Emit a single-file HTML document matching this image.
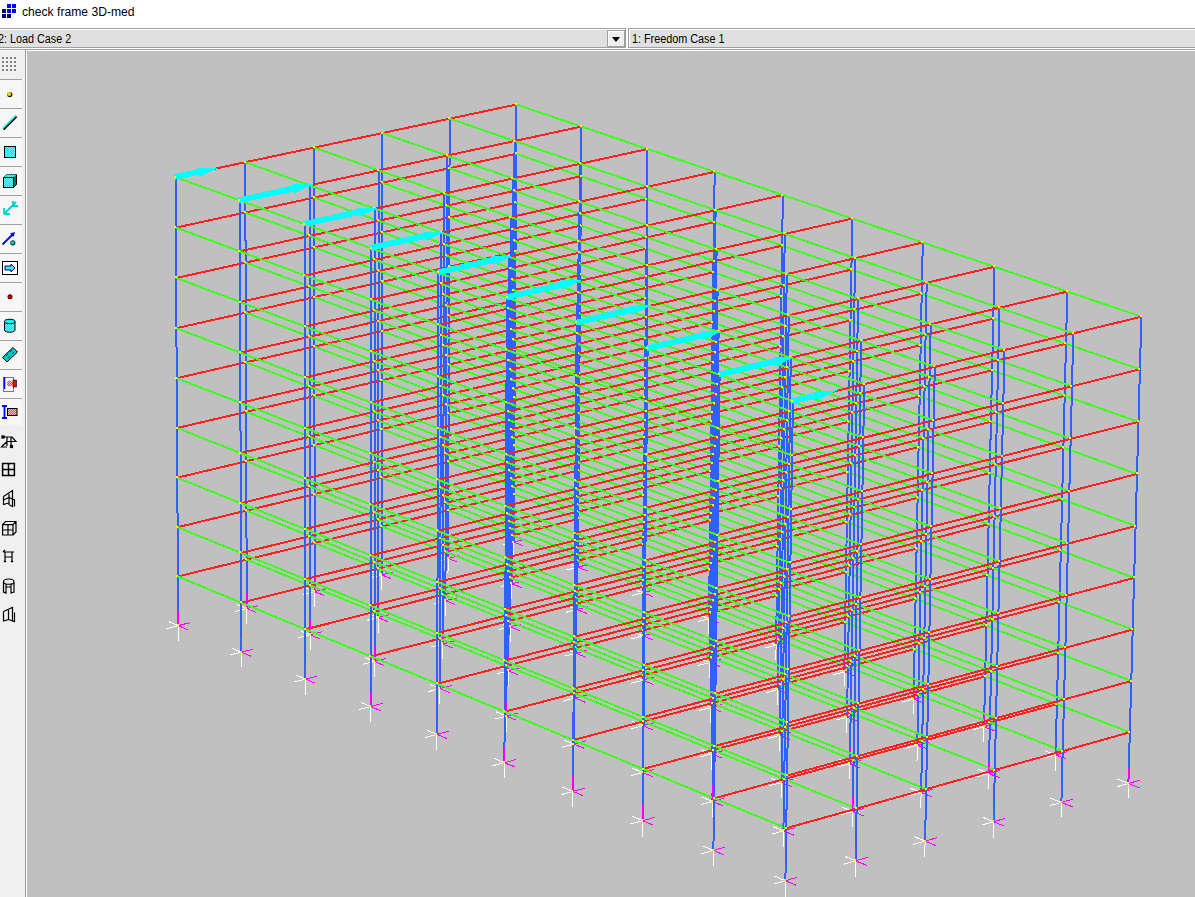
<!DOCTYPE html>
<html><head><meta charset="utf-8">
<style>
html,body{margin:0;padding:0;width:1195px;height:897px;overflow:hidden;background:#fff;}
body{position:relative;font-family:"Liberation Sans",sans-serif;}
.t{position:absolute;white-space:nowrap;color:#000;font-size:12px;}
#title{left:22px;top:5px;font-size:12.5px;transform:scaleX(0.97);transform-origin:0 0;}
.t2{transform:scaleX(0.9);transform-origin:0 0;}
.hl{position:absolute;left:0;width:1195px;height:1px;}
#combo1{position:absolute;left:0;top:28px;width:626px;height:20px;}
#vp{position:absolute;left:27px;top:51px;width:1168px;height:846px;background:#c0c0c0;}
svg{position:absolute;left:0;top:0;}
.r{stroke:#ff2020;stroke-width:2;fill:none}
.g{stroke:#40ff20;stroke-width:2;fill:none}
.b{stroke:#3060ff;stroke-width:2;fill:none}
.w{stroke:#fff;stroke-width:1;fill:none}
.m{stroke:#ff00ff;stroke-width:1;fill:none}
.a{fill:#00ffff}
.y{fill:#ffff00}
</style></head><body>
<svg width="20" height="22" viewBox="0 0 20 22" style="left:0;top:0">
<rect x="7" y="4" width="4" height="4" fill="#0000ff"/><rect x="12" y="4" width="4" height="4" fill="#0000ff"/>
<rect x="2" y="9" width="4" height="4" fill="#000080"/><rect x="7" y="9" width="4" height="4" fill="#0000ff"/><rect x="12" y="9" width="4" height="4" fill="#0000ff"/>
<rect x="2" y="14" width="4" height="4" fill="#000080"/><rect x="7" y="14" width="4" height="4" fill="#000080"/>
</svg>
<div class="t" id="title">check frame 3D-med</div>
<div class="hl" style="top:28px;background:#a0a0a0"></div>
<div class="hl" style="top:29px;background:#fff"></div>
<div class="hl" style="top:30px;height:17px;background:#e0e0e0"></div>
<div class="hl" style="top:47px;background:#a0a0a0"></div>
<div class="hl" style="top:48px;background:#fff"></div>
<div class="hl" style="top:49px;background:#a0a0a0"></div>
<div class="hl" style="top:50px;background:#fff"></div>
<div style="position:absolute;left:625px;top:28px;width:1px;height:20px;background:#a0a0a0"></div>
<div style="position:absolute;left:626px;top:28px;width:2px;height:21px;background:#fff"></div>
<div style="position:absolute;left:628px;top:28px;width:1px;height:20px;background:#a0a0a0"></div>
<div style="position:absolute;left:629px;top:29px;width:1px;height:18px;background:#fff"></div>
<div style="position:absolute;left:607px;top:30px;width:18px;height:17px;background:#a0a0a0"></div>
<div style="position:absolute;left:608px;top:31px;width:16px;height:15px;background:#fff"></div>
<div style="position:absolute;left:609px;top:32px;width:15px;height:14px;background:#efefef"></div>
<svg width="12" height="8" style="left:611px;top:36px"><path d="M1 1h8l-4 5z" fill="#000"/></svg>
<div class="t t2" style="left:-2px;top:32px;">2: Load Case 2</div>
<div class="t t2" style="left:632px;top:32px;">1: Freedom Case 1</div>
<div style="position:absolute;left:0;top:51px;width:25px;height:846px;background:#f0f0f0"></div>
<div style="position:absolute;left:25px;top:49px;width:1px;height:848px;background:#a0a0a0"></div>
<div style="position:absolute;left:26px;top:50px;width:1px;height:847px;background:#fff"></div>
<div id="vp"></div>
<svg width="1195" height="897" viewBox="0 0 1195 897" shape-rendering="crispEdges">
<defs><clipPath id="c"><rect x="27" y="51" width="1168" height="846"/></clipPath></defs>
<g clip-path="url(#c)">
<path class="b" d="M513.7 542L514 494.1M514 494.1L514.3 445.9M514.3 445.9L514.6 397.7"/>
<path class="r" d="M448.3 510.2L514 494.1"/>
<path class="g" d="M514 494.1L578.2 518.9"/>
<path class="b" d="M514.6 397.7L514.9 349.2"/>
<path class="r" d="M448.4 461.8L514.3 445.9"/>
<path class="b" d="M448.1 558.4L448.3 510.2"/>
<path class="g" d="M514.3 445.9L578.6 470.4"/>
<path class="b" d="M514.9 349.2L515.2 300.6"/>
<path class="r" d="M448.6 413.3L514.6 397.7"/>
<path class="b" d="M448.3 510.2L448.4 461.8M577.8 567.2L578.2 518.9"/>
<path class="g" d="M514.6 397.7L579 421.8"/>
<path class="b" d="M515.2 300.6L515.5 251.8"/>
<path class="r" d="M448.8 364.6L514.9 349.2"/>
<path class="b" d="M448.4 461.8L448.6 413.3"/>
<path class="r" d="M381.8 526.5L448.3 510.2"/>
<path class="b" d="M578.2 518.9L578.6 470.4"/>
<path class="g" d="M514.9 349.2L579.4 373"/>
<path class="b" d="M515.5 251.8L515.8 202.9"/>
<path class="g" d="M448.3 510.2L512.3 535.3"/>
<path class="r" d="M449 315.8L515.2 300.6"/>
<path class="b" d="M448.6 413.3L448.8 364.6"/>
<path class="r" d="M381.8 477.9L448.4 461.8"/>
<path class="b" d="M381.7 574.9L381.8 526.5M578.6 470.4L579 421.8"/>
<path class="r" d="M512.3 535.3L578.2 518.9"/>
<path class="g" d="M515.2 300.6L579.8 324.1"/>
<path class="w" d="M513.7 542L504.2 538.3"/>
<path class="m" d="M513.7 542L524.8 539.3"/>
<path class="b" d="M515.8 202.9L516.1 153.8"/>
<path class="w" d="M513.7 542L513.6 556.9"/>
<path class="g" d="M448.4 461.8L512.5 486.6"/>
<path class="r" d="M449.2 266.8L515.5 251.8"/>
<path class="b" d="M448.8 364.6L449 315.8"/>
<path class="m" d="M513.7 542L513.8 527.2"/>
<path class="r" d="M381.9 429.1L448.6 413.3"/>
<path class="g" d="M578.2 518.9L643.4 544.1"/>
<path class="w" d="M513.7 542L502.6 544.8"/>
<path class="b" d="M381.8 526.5L381.8 477.9"/>
<path class="m" d="M513.7 542L523.3 545.8"/>
<path class="b" d="M579 421.8L579.4 373"/>
<path class="r" d="M512.5 486.6L578.6 470.4"/>
<path class="g" d="M515.5 251.8L580.2 275"/>
<path class="b" d="M512 583.8L512.3 535.3M516.1 153.8L516.4 104.5"/>
<path class="g" d="M448.6 413.3L512.8 437.7"/>
<path class="r" d="M449.3 217.6L515.8 202.9"/>
<path class="b" d="M449 315.8L449.2 266.8"/>
<path class="r" d="M382 380.2L448.8 364.6"/>
<path class="g" d="M578.6 470.4L643.9 495.3"/>
<path class="b" d="M381.8 477.9L381.9 429.1"/>
<path class="r" d="M314.5 543L381.8 526.5"/>
<path class="b" d="M579.4 373L579.8 324.1"/>
<path class="r" d="M512.8 437.7L579 421.8"/>
<path class="g" d="M515.8 202.9L580.6 225.7"/>
<path class="b" d="M512.3 535.3L512.5 486.6"/>
<path class="g" d="M448.8 364.6L513.1 388.7"/>
<path class="y" d="M512 541h2v2h-2z"/>
<path class="r" d="M449.5 168.2L516.1 153.8"/>
<path class="b" d="M642.8 592.7L643.4 544.1M449.2 266.8L449.3 217.6"/>
<path class="g" d="M381.8 526.5L445.6 551.8"/>
<path class="r" d="M382 331.1L449 315.8"/>
<path class="g" d="M579 421.8L644.4 446.3"/>
<path class="b" d="M381.9 429.1L382 380.2"/>
<path class="r" d="M314.5 494.1L381.8 477.9"/>
<path class="b" d="M579.8 324.1L580.2 275M314.6 591.6L314.5 543"/>
<path class="r" d="M513.1 388.7L579.4 373"/>
<path class="g" d="M516.1 153.8L581 176.2"/>
<path class="b" d="M512.5 486.6L512.8 437.7"/>
<path class="r" d="M445.6 551.8L512.3 535.3"/>
<path class="g" d="M449 315.8L513.4 339.5"/>
<path class="w" d="M448.1 558.4L438.6 554.6"/>
<path class="y" d="M513 493h2v2h-2z"/>
<path class="m" d="M448.1 558.4L459.3 555.6"/>
<path class="r" d="M449.7 118.7L516.4 104.5"/>
<path class="b" d="M643.4 544.1L643.9 495.3M449.3 217.6L449.5 168.2"/>
<path class="w" d="M448.1 558.4L448 573.3"/>
<path class="g" d="M381.8 477.9L445.8 502.9"/>
<path class="r" d="M382.1 281.9L449.2 266.8"/>
<path class="g" d="M579.4 373L644.9 397.2"/>
<path class="b" d="M382 380.2L382 331.1"/>
<path class="m" d="M448.1 558.4L448.1 543.5"/>
<path class="r" d="M314.5 445.1L381.9 429.1"/>
<path class="b" d="M580.2 275L580.6 225.7"/>
<path class="g" d="M512.3 535.3L577.3 560.8"/>
<path class="w" d="M448.1 558.4L436.8 561.2"/>
<path class="b" d="M314.5 543L314.5 494.1"/>
<path class="r" d="M513.4 339.5L579.8 324.1"/>
<path class="m" d="M448.1 558.4L457.6 562.2"/>
<path class="g" d="M516.4 104.5L581.4 126.6"/>
<path class="b" d="M512.8 437.7L513.1 388.7"/>
<path class="r" d="M445.8 502.9L512.5 486.6"/>
<path class="g" d="M449.2 266.8L513.7 290.1"/>
<path class="b" d="M445.4 600.6L445.6 551.8"/>
<path class="y" d="M513 444h2v2h-2z"/>
<path class="b" d="M643.9 495.3L644.4 446.3M449.5 168.2L449.7 118.7"/>
<path class="g" d="M381.9 429.1L445.9 453.8"/>
<path class="r" d="M577.3 560.8L643.4 544.1M382.2 232.4L449.3 217.6"/>
<path class="g" d="M579.8 324.1L645.4 347.9"/>
<path class="w" d="M577.8 567.2L568.1 563.4"/>
<path class="b" d="M382 331.1L382.1 281.9"/>
<path class="m" d="M577.8 567.2L588.9 564.4"/>
<path class="r" d="M314.4 396L382 380.2"/>
<path class="b" d="M580.6 225.7L581 176.2"/>
<path class="w" d="M577.8 567.2L577.7 582.1"/>
<path class="g" d="M512.5 486.6L577.7 511.7"/>
<path class="b" d="M314.5 494.1L314.5 445.1"/>
<path class="r" d="M513.7 290.1L580.2 275M246.6 559.6L314.5 543"/>
<path class="b" d="M513.1 388.7L513.4 339.5"/>
<path class="m" d="M577.8 567.2L577.9 552.2"/>
<path class="r" d="M445.9 453.8L512.8 437.7"/>
<path class="g" d="M643.4 544.1L709.6 569.7M449.3 217.6L514 240.6"/>
<path class="w" d="M577.8 567.2L566.6 570"/>
<path class="b" d="M445.6 551.8L445.8 502.9"/>
<path class="y" d="M513 396h2v2h-2z"/>
<path class="m" d="M577.8 567.2L587.5 571"/>
<path class="b" d="M644.4 446.3L644.9 397.2"/>
<path class="g" d="M382 380.2L446.1 404.5"/>
<path class="y" d="M447 557h2v2h-2z"/>
<path class="r" d="M577.7 511.7L643.9 495.3M382.2 182.8L449.5 168.2"/>
<path class="g" d="M580.2 275L645.9 298.5"/>
<path class="b" d="M576.9 609.6L577.3 560.8M382.1 281.9L382.2 232.4"/>
<path class="g" d="M314.5 543L378.2 568.6"/>
<path class="r" d="M314.4 346.6L382 331.1"/>
<path class="b" d="M581 176.2L581.4 126.6"/>
<path class="g" d="M512.8 437.7L578.1 462.5"/>
<path class="b" d="M314.5 445.1L314.4 396"/>
<path class="r" d="M514 240.6L580.6 225.7M246.4 510.6L314.5 494.1"/>
<path class="b" d="M513.4 339.5L513.7 290.1M246.7 608.5L246.6 559.6"/>
<path class="r" d="M446.1 404.5L513.1 388.7"/>
<path class="g" d="M643.9 495.3L710.2 520.6M449.5 168.2L514.3 190.9"/>
<path class="b" d="M445.8 502.9L445.9 453.8"/>
<path class="y" d="M513 348h2v2h-2z"/>
<path class="r" d="M378.2 568.6L445.6 551.8"/>
<path class="b" d="M644.9 397.2L645.4 347.9"/>
<path class="g" d="M382 331.1L446.3 355.1"/>
<path class="w" d="M381.7 574.9L372.2 571.1"/>
<path class="y" d="M447 509h2v2h-2z"/>
<path class="r" d="M578.1 462.5L644.4 446.3"/>
<path class="m" d="M381.7 574.9L393 572.1"/>
<path class="r" d="M382.3 133.1L449.7 118.7"/>
<path class="g" d="M580.6 225.7L646.5 248.8"/>
<path class="b" d="M577.3 560.8L577.7 511.7M382.2 232.4L382.2 182.8"/>
<path class="w" d="M381.7 574.9L381.7 589.9"/>
<path class="g" d="M314.5 494.1L378.3 519.4"/>
<path class="r" d="M314.3 297.1L382.1 281.9"/>
<path class="g" d="M513.1 388.7L578.5 413.1"/>
<path class="b" d="M314.4 396L314.4 346.6"/>
<path class="y" d="M576 566h2v2h-2z"/>
<path class="r" d="M514.3 190.9L581 176.2"/>
<path class="m" d="M381.7 574.9L381.7 559.9"/>
<path class="r" d="M246.3 461.3L314.5 445.1"/>
<path class="b" d="M708.9 618.7L709.6 569.7M513.7 290.1L514 240.6"/>
<path class="g" d="M445.6 551.8L510.4 577.6"/>
<path class="w" d="M381.7 574.9L370.3 577.8"/>
<path class="b" d="M246.6 559.6L246.4 510.6"/>
<path class="r" d="M446.3 355.1L513.4 339.5"/>
<path class="m" d="M381.7 574.9L391.2 578.7"/>
<path class="g" d="M644.4 446.3L710.8 471.3M449.7 118.7L514.6 141"/>
<path class="b" d="M445.9 453.8L446.1 404.5"/>
<path class="y" d="M514 299h2v2h-2z"/>
<path class="r" d="M378.3 519.4L445.8 502.9"/>
<path class="b" d="M645.4 347.9L645.9 298.5"/>
<path class="g" d="M382.1 281.9L446.5 305.5"/>
<path class="b" d="M378.1 617.6L378.2 568.6"/>
<path class="y" d="M447 460h2v2h-2z"/>
<path class="r" d="M578.5 413.1L644.9 397.2"/>
<path class="g" d="M581 176.2L647 199"/>
<path class="b" d="M577.7 511.7L578.1 462.5M382.2 182.8L382.3 133.1"/>
<path class="g" d="M314.5 445.1L378.3 470.1"/>
<path class="r" d="M510.4 577.6L577.3 560.8M314.3 247.4L382.2 232.4"/>
<path class="g" d="M513.4 339.5L578.9 363.6"/>
<path class="w" d="M512 583.8L502.3 580"/>
<path class="b" d="M314.4 346.6L314.3 297.1"/>
<path class="y" d="M577 517h2v2h-2z"/>
<path class="m" d="M512 583.8L523.2 581"/>
<path class="r" d="M514.6 141L581.4 126.6M246.1 411.9L314.4 396"/>
<path class="b" d="M709.6 569.7L710.2 520.6M514 240.6L514.3 190.9"/>
<path class="w" d="M512 583.8L511.9 598.8"/>
<path class="g" d="M445.8 502.9L510.7 528.3"/>
<path class="b" d="M246.4 510.6L246.3 461.3"/>
<path class="r" d="M446.5 305.5L513.7 290.1M177.9 576.5L246.6 559.6"/>
<path class="g" d="M644.9 397.2L711.5 421.8"/>
<path class="b" d="M446.1 404.5L446.3 355.1"/>
<path class="y" d="M514 250h2v2h-2z"/>
<path class="m" d="M512 583.8L512.1 568.8"/>
<path class="r" d="M378.3 470.1L445.9 453.8"/>
<path class="b" d="M645.9 298.5L646.5 248.8"/>
<path class="g" d="M577.3 560.8L643.3 586.7M382.2 232.4L446.7 255.7"/>
<path class="w" d="M512 583.8L500.7 586.7"/>
<path class="b" d="M378.2 568.6L378.3 519.4"/>
<path class="y" d="M447 412h2v2h-2z"/>
<path class="r" d="M578.9 363.6L645.4 347.9"/>
<path class="m" d="M512 583.8L521.6 587.7"/>
<path class="g" d="M581.4 126.6L647.5 149"/>
<path class="b" d="M578.1 462.5L578.5 413.1"/>
<path class="g" d="M314.4 396L378.4 420.6"/>
<path class="y" d="M380 573h2v2h-2z"/>
<path class="r" d="M510.7 528.3L577.7 511.7M314.2 197.6L382.2 182.8"/>
<path class="g" d="M513.7 290.1L579.3 313.9"/>
<path class="b" d="M510.1 626.7L510.4 577.6M314.3 297.1L314.3 247.4"/>
<path class="y" d="M577 469h2v2h-2z"/>
<path class="g" d="M246.6 559.6L310 585.5"/>
<path class="r" d="M245.9 362.3L314.4 346.6"/>
<path class="b" d="M710.2 520.6L710.8 471.3M514.3 190.9L514.6 141"/>
<path class="g" d="M445.9 453.8L511 478.9"/>
<path class="b" d="M246.3 461.3L246.1 411.9"/>
<path class="r" d="M643.3 586.7L709.6 569.7M446.7 255.7L514 240.6M177.6 527.2L246.4 510.6"/>
<path class="g" d="M645.4 347.9L712.1 372.1"/>
<path class="w" d="M642.8 592.7L633 588.9"/>
<path class="b" d="M446.3 355.1L446.5 305.5"/>
<path class="y" d="M514 201h2v2h-2z"/>
<path class="m" d="M642.8 592.7L654 589.9"/>
<path class="b" d="M178.1 625.6L177.9 576.5"/>
<path class="r" d="M378.4 420.6L446.1 404.5"/>
<path class="b" d="M646.5 248.8L647 199"/>
<path class="w" d="M642.8 592.7L642.7 607.8"/>
<path class="g" d="M577.7 511.7L643.8 537.3M382.2 182.8L446.8 205.7"/>
<path class="b" d="M378.3 519.4L378.3 470.1"/>
<path class="y" d="M447 363h2v2h-2z"/>
<path class="r" d="M579.3 313.9L645.9 298.5M310 585.5L378.2 568.6"/>
<path class="b" d="M578.5 413.1L578.9 363.6"/>
<path class="g" d="M314.4 346.6L378.4 370.9"/>
<path class="w" d="M314.6 591.6L305.1 587.8"/>
<path class="y" d="M380 525h2v2h-2z"/>
<path class="m" d="M642.8 592.7L643 577.7"/>
<path class="r" d="M511 478.9L578.1 462.5"/>
<path class="m" d="M314.6 591.6L326.1 588.8"/>
<path class="r" d="M314.2 147.6L382.3 133.1"/>
<path class="g" d="M709.6 569.7L776.8 595.7M514 240.6L579.7 264"/>
<path class="w" d="M642.8 592.7L631.7 595.6"/>
<path class="b" d="M510.4 577.6L510.7 528.3M314.3 247.4L314.2 197.6"/>
<path class="w" d="M314.6 591.6L314.6 606.7"/>
<path class="y" d="M577 420h2v2h-2z"/>
<path class="g" d="M246.4 510.6L310 536.1"/>
<path class="m" d="M642.8 592.7L652.7 596.6"/>
<path class="r" d="M245.8 312.6L314.3 297.1"/>
<path class="b" d="M710.8 471.3L711.5 421.8"/>
<path class="g" d="M446.1 404.5L511.3 429.3"/>
<path class="b" d="M246.1 411.9L245.9 362.3"/>
<path class="y" d="M510 582h2v2h-2z"/>
<path class="r" d="M643.8 537.3L710.2 520.6M446.8 205.7L514.3 190.9"/>
<path class="m" d="M314.6 591.6L314.6 576.6"/>
<path class="r" d="M177.3 477.7L246.3 461.3"/>
<path class="g" d="M645.9 298.5L712.7 322.3"/>
<path class="b" d="M642.8 635.9L643.3 586.7M446.5 305.5L446.7 255.7"/>
<path class="y" d="M515 152h2v2h-2z"/>
<path class="g" d="M378.2 568.6L442.9 594.6"/>
<path class="w" d="M314.6 591.6L303.1 594.5"/>
<path class="b" d="M177.9 576.5L177.6 527.2"/>
<path class="r" d="M378.4 370.9L446.3 355.1"/>
<path class="m" d="M314.6 591.6L324.1 595.5"/>
<path class="b" d="M647 199L647.5 149"/>
<path class="g" d="M578.1 462.5L644.3 487.7M382.3 133.1L447 155.6"/>
<path class="b" d="M378.3 470.1L378.4 420.6"/>
<path class="y" d="M447 314h2v2h-2z"/>
<path class="r" d="M579.7 264L646.5 248.8M310 536.1L378.3 519.4"/>
<path class="b" d="M578.9 363.6L579.3 313.9"/>
<path class="g" d="M314.3 297.1L378.5 321"/>
<path class="b" d="M310.1 634.8L310 585.5"/>
<path class="y" d="M380 476h2v2h-2z"/>
<path class="r" d="M511.3 429.3L578.5 413.1"/>
<path class="g" d="M710.2 520.6L777.6 546.3M514.3 190.9L580.1 213.9"/>
<path class="b" d="M510.7 528.3L511 478.9M314.2 197.6L314.2 147.6"/>
<path class="y" d="M578 372h2v2h-2z"/>
<path class="g" d="M246.3 461.3L309.9 486.5"/>
<path class="r" d="M442.9 594.6L510.4 577.6M245.6 262.6L314.3 247.4"/>
<path class="b" d="M711.5 421.8L712.1 372.1"/>
<path class="g" d="M446.3 355.1L511.6 379.5"/>
<path class="w" d="M445.4 600.6L435.8 596.7"/>
<path class="b" d="M245.9 362.3L245.8 312.6"/>
<path class="y" d="M511 534h2v2h-2z"/>
<path class="r" d="M644.3 487.7L710.8 471.3"/>
<path class="m" d="M445.4 600.6L456.8 597.7"/>
<path class="r" d="M447 155.6L514.6 141M177 428L246.1 411.9"/>
<path class="g" d="M646.5 248.8L713.4 272.3"/>
<path class="b" d="M643.3 586.7L643.8 537.3M446.7 255.7L446.8 205.7"/>
<path class="w" d="M445.4 600.6L445.4 615.7"/>
<path class="y" d="M515 103h2v2h-2z"/>
<path class="g" d="M378.3 519.4L443 545.1"/>
<path class="b" d="M177.6 527.2L177.3 477.7"/>
<path class="r" d="M378.5 321L446.5 305.5"/>
<path class="g" d="M578.5 413.1L644.9 438"/>
<path class="b" d="M378.4 420.6L378.4 370.9"/>
<path class="y" d="M641 591h2v2h-2zM448 265h2v2h-2z"/>
<path class="r" d="M580.1 213.9L647 199"/>
<path class="m" d="M445.4 600.6L445.5 585.5"/>
<path class="r" d="M309.9 486.5L378.3 470.1"/>
<path class="b" d="M776.1 645.1L776.8 595.7M579.3 313.9L579.7 264"/>
<path class="g" d="M510.4 577.6L576.3 603.8M314.3 247.4L378.6 271"/>
<path class="w" d="M445.4 600.6L434 603.5"/>
<path class="b" d="M310 585.5L310 536.1"/>
<path class="y" d="M380 428h2v2h-2z"/>
<path class="r" d="M511.6 379.5L578.9 363.6"/>
<path class="m" d="M445.4 600.6L455.1 604.5"/>
<path class="g" d="M710.8 471.3L778.3 496.6M514.6 141L580.5 163.7"/>
<path class="b" d="M511 478.9L511.3 429.3"/>
<path class="y" d="M578 323h2v2h-2z"/>
<path class="g" d="M246.1 411.9L309.9 436.8"/>
<path class="y" d="M313 590h2v2h-2z"/>
<path class="r" d="M443 545.1L510.7 528.3M245.4 212.5L314.2 197.6"/>
<path class="b" d="M712.1 372.1L712.7 322.3"/>
<path class="g" d="M446.5 305.5L511.9 329.5"/>
<path class="b" d="M442.7 644L442.9 594.6M245.8 312.6L245.6 262.6"/>
<path class="y" d="M511 485h2v2h-2z"/>
<path class="g" d="M177.9 576.5L241.1 602.7"/>
<path class="r" d="M644.9 438L711.5 421.8M176.7 378.2L245.9 362.3"/>
<path class="g" d="M647 199L714 222.2"/>
<path class="b" d="M643.8 537.3L644.3 487.7M446.8 205.7L447 155.6"/>
<path class="g" d="M378.3 470.1L443.2 495.4"/>
<path class="b" d="M177.3 477.7L177 428"/>
<path class="r" d="M576.3 603.8L643.3 586.7M378.6 271L446.7 255.7"/>
<path class="g" d="M578.9 363.6L645.4 388.1"/>
<path class="w" d="M576.9 609.6L567.1 605.7"/>
<path class="b" d="M378.4 370.9L378.5 321"/>
<path class="y" d="M642 543h2v2h-2zM448 216h2v2h-2z"/>
<path class="m" d="M576.9 609.6L588.1 606.7"/>
<path class="r" d="M580.5 163.7L647.5 149M309.9 436.8L378.4 420.6"/>
<path class="b" d="M776.8 595.7L777.6 546.3M579.7 264L580.1 213.9"/>
<path class="w" d="M576.9 609.6L576.7 624.7"/>
<path class="g" d="M510.7 528.3L576.7 554.1M314.2 197.6L378.6 220.8"/>
<path class="b" d="M310 536.1L309.9 486.5"/>
<path class="y" d="M380 379h2v2h-2z"/>
<path class="r" d="M511.9 329.5L579.3 313.9M241.1 602.7L310 585.5"/>
<path class="g" d="M711.5 421.8L779.1 446.8"/>
<path class="b" d="M511.3 429.3L511.6 379.5"/>
<path class="y" d="M579 273h2v2h-2z"/>
<path class="g" d="M245.9 362.3L309.8 386.8"/>
<path class="w" d="M246.7 608.5L237.3 604.6"/>
<path class="y" d="M313 541h2v2h-2z"/>
<path class="m" d="M576.9 609.6L577 594.5"/>
<path class="r" d="M443.2 495.4L511 478.9"/>
<path class="m" d="M246.7 608.5L258.3 605.7"/>
<path class="r" d="M245.3 162.2L314.2 147.6"/>
<path class="b" d="M712.7 322.3L713.4 272.3"/>
<path class="g" d="M643.3 586.7L710.4 613M446.7 255.7L512.2 279.4"/>
<path class="w" d="M576.9 609.6L565.6 612.5"/>
<path class="b" d="M442.9 594.6L443 545.1M245.6 262.6L245.4 212.5"/>
<path class="w" d="M246.7 608.5L246.8 623.7"/>
<path class="y" d="M511 436h2v2h-2z"/>
<path class="g" d="M177.6 527.2L241 553"/>
<path class="r" d="M645.4 388.1L712.1 372.1"/>
<path class="m" d="M576.9 609.6L586.7 613.5"/>
<path class="r" d="M176.4 328.2L245.8 312.6"/>
<path class="g" d="M647.5 149L714.7 171.8"/>
<path class="b" d="M644.3 487.7L644.9 438"/>
<path class="g" d="M378.4 420.6L443.4 445.5"/>
<path class="b" d="M177 428L176.7 378.2"/>
<path class="y" d="M444 599h2v2h-2z"/>
<path class="r" d="M576.7 554.1L643.8 537.3M378.6 220.8L446.8 205.7"/>
<path class="m" d="M246.7 608.5L246.7 593.4"/>
<path class="g" d="M579.3 313.9L645.9 338"/>
<path class="b" d="M575.9 653.2L576.3 603.8M378.5 321L378.6 271"/>
<path class="y" d="M642 494h2v2h-2zM448 167h2v2h-2z"/>
<path class="g" d="M310 585.5L374.5 611.9"/>
<path class="w" d="M246.7 608.5L235.1 611.4"/>
<path class="r" d="M309.8 386.8L378.4 370.9"/>
<path class="m" d="M246.7 608.5L256.2 612.5"/>
<path class="b" d="M777.6 546.3L778.3 496.6M580.1 213.9L580.5 163.7"/>
<path class="g" d="M511 478.9L577.1 504.3M314.2 147.6L378.7 170.4"/>
<path class="b" d="M309.9 486.5L309.9 436.8"/>
<path class="y" d="M381 330h2v2h-2z"/>
<path class="r" d="M710.4 613L776.8 595.7M512.2 279.4L579.7 264M241 553L310 536.1"/>
<path class="g" d="M712.1 372.1L779.8 396.8"/>
<path class="w" d="M708.9 618.7L698.9 614.8"/>
<path class="b" d="M511.6 379.5L511.9 329.5"/>
<path class="y" d="M579 224h2v2h-2z"/>
<path class="g" d="M245.8 312.6L309.8 336.7"/>
<path class="m" d="M708.9 618.7L720.1 615.8"/>
<path class="b" d="M241.3 652.2L241.1 602.7"/>
<path class="y" d="M313 493h2v2h-2z"/>
<path class="r" d="M443.4 445.5L511.3 429.3"/>
<path class="b" d="M713.4 272.3L714 222.2"/>
<path class="w" d="M708.9 618.7L708.7 633.8"/>
<path class="g" d="M643.8 537.3L711 563.2M446.8 205.7L512.5 229"/>
<path class="b" d="M443 545.1L443.2 495.4M245.4 212.5L245.3 162.2"/>
<path class="y" d="M512 387h2v2h-2z"/>
<path class="g" d="M177.3 477.7L240.8 503.2"/>
<path class="r" d="M645.9 338L712.7 322.3M374.5 611.9L442.9 594.6M176.2 278L245.6 262.6"/>
<path class="b" d="M644.9 438L645.4 388.1"/>
<path class="g" d="M378.4 370.9L443.6 395.5"/>
<path class="w" d="M378.1 617.6L368.5 613.7"/>
<path class="b" d="M176.7 378.2L176.4 328.2"/>
<path class="y" d="M444 550h2v2h-2z"/>
<path class="m" d="M708.9 618.7L709.1 603.5"/>
<path class="r" d="M577.1 504.3L644.3 487.7"/>
<path class="m" d="M378.1 617.6L389.6 614.7"/>
<path class="r" d="M378.7 170.4L447 155.6"/>
<path class="g" d="M776.8 595.7L845.1 622.2M579.7 264L646.5 287.8"/>
<path class="w" d="M708.9 618.7L697.7 621.6"/>
<path class="b" d="M576.3 603.8L576.7 554.1M378.6 271L378.6 220.8"/>
<path class="w" d="M378.1 617.6L378.1 632.8"/>
<path class="y" d="M643 445h2v2h-2zM448 117h2v2h-2z"/>
<path class="g" d="M310 536.1L374.6 562.1"/>
<path class="m" d="M708.9 618.7L718.9 622.6"/>
<path class="r" d="M309.8 336.7L378.5 321"/>
<path class="b" d="M778.3 496.6L779.1 446.8"/>
<path class="g" d="M511.3 429.3L577.5 454.4"/>
<path class="b" d="M309.9 436.8L309.8 386.8"/>
<path class="y" d="M575 608h2v2h-2zM381 280h2v2h-2z"/>
<path class="r" d="M711 563.2L777.6 546.3M512.5 229L580.1 213.9"/>
<path class="m" d="M378.1 617.6L378.2 602.4"/>
<path class="r" d="M240.8 503.2L309.9 486.5"/>
<path class="g" d="M712.7 322.3L780.6 346.6"/>
<path class="b" d="M709.8 662.5L710.4 613M511.9 329.5L512.2 279.4"/>
<path class="y" d="M580 175h2v2h-2z"/>
<path class="g" d="M442.9 594.6L508.6 621.1M245.6 262.6L309.7 286.4"/>
<path class="w" d="M378.1 617.6L366.6 620.5"/>
<path class="b" d="M241.1 602.7L241 553"/>
<path class="y" d="M313 444h2v2h-2z"/>
<path class="r" d="M443.6 395.5L511.6 379.5"/>
<path class="m" d="M378.1 617.6L387.7 621.5"/>
<path class="b" d="M714 222.2L714.7 171.8"/>
<path class="g" d="M644.3 487.7L711.7 513.3M447 155.6L512.8 178.5"/>
<path class="b" d="M443.2 495.4L443.4 445.5"/>
<path class="y" d="M512 338h2v2h-2z"/>
<path class="g" d="M177 428L240.6 453.1"/>
<path class="r" d="M646.5 287.8L713.4 272.3"/>
<path class="y" d="M245 607h2v2h-2z"/>
<path class="r" d="M374.6 562.1L443 545.1M175.9 227.6L245.4 212.5"/>
<path class="b" d="M645.4 388.1L645.9 338"/>
<path class="g" d="M378.5 321L443.7 345.3"/>
<path class="b" d="M374.5 661.5L374.5 611.9M176.4 328.2L176.2 278"/>
<path class="y" d="M444 501h2v2h-2z"/>
<path class="r" d="M577.5 454.4L644.9 438"/>
<path class="g" d="M777.6 546.3L846 572.3M580.1 213.9L647 237.4"/>
<path class="b" d="M576.7 554.1L577.1 504.3M378.6 220.8L378.7 170.4"/>
<path class="y" d="M643 396h2v2h-2z"/>
<path class="g" d="M309.9 486.5L374.6 512.1"/>
<path class="r" d="M508.6 621.1L576.3 603.8M309.7 286.4L378.6 271"/>
<path class="b" d="M779.1 446.8L779.8 396.8"/>
<path class="g" d="M511.6 379.5L578 404.2"/>
<path class="w" d="M510.1 626.7L500.4 622.8"/>
<path class="b" d="M309.8 386.8L309.8 336.7"/>
<path class="y" d="M576 559h2v2h-2zM381 231h2v2h-2z"/>
<path class="r" d="M711.7 513.3L778.3 496.6"/>
<path class="m" d="M510.1 626.7L521.5 623.8"/>
<path class="r" d="M512.8 178.5L580.5 163.7M240.6 453.1L309.9 436.8"/>
<path class="g" d="M713.4 272.3L781.4 296.2"/>
<path class="b" d="M710.4 613L711 563.2M512.2 279.4L512.5 229"/>
<path class="w" d="M510.1 626.7L510.1 641.9"/>
<path class="y" d="M580 125h2v2h-2z"/>
<path class="g" d="M443 545.1L508.9 571.2M245.4 212.5L309.7 235.9"/>
<path class="b" d="M241 553L240.8 503.2"/>
<path class="y" d="M313 394h2v2h-2z"/>
<path class="r" d="M443.7 345.3L511.9 329.5"/>
<path class="g" d="M644.9 438L712.3 463.2"/>
<path class="b" d="M443.4 445.5L443.6 395.5"/>
<path class="y" d="M707 617h2v2h-2zM512 289h2v2h-2z"/>
<path class="g" d="M176.7 378.2L240.4 402.9"/>
<path class="r" d="M647 237.4L714 222.2"/>
<path class="w" d="M178.1 625.6L168.8 621.7"/>
<path class="y" d="M245 558h2v2h-2z"/>
<path class="m" d="M510.1 626.7L510.2 611.5"/>
<path class="r" d="M374.6 512.1L443.2 495.4"/>
<path class="m" d="M178.1 625.6L189.9 622.7"/>
<path class="r" d="M175.6 177.1L245.3 162.2"/>
<path class="b" d="M844.3 671.8L845.1 622.2M645.9 338L646.5 287.8"/>
<path class="g" d="M576.3 603.8L643.3 630.4M378.6 271L443.9 294.9"/>
<path class="w" d="M510.1 626.7L498.7 629.6"/>
<path class="b" d="M374.5 611.9L374.6 562.1M176.2 278L175.9 227.6"/>
<path class="w" d="M178.1 625.6L178.2 640.8"/>
<path class="y" d="M444 452h2v2h-2z"/>
<path class="r" d="M578 404.2L645.4 388.1"/>
<path class="m" d="M510.1 626.7L519.9 630.7"/>
<path class="g" d="M778.3 496.6L846.9 522.3M580.5 163.7L647.5 186.8"/>
<path class="b" d="M577.1 504.3L577.5 454.4"/>
<path class="y" d="M644 346h2v2h-2z"/>
<path class="g" d="M309.9 436.8L374.7 462"/>
<path class="y" d="M377 616h2v2h-2z"/>
<path class="r" d="M508.9 571.2L576.7 554.1M309.7 235.9L378.6 220.8"/>
<path class="b" d="M779.8 396.8L780.6 346.6"/>
<path class="m" d="M178.1 625.6L178.1 610.4"/>
<path class="g" d="M511.9 329.5L578.4 353.9"/>
<path class="b" d="M508.3 670.8L508.6 621.1M309.8 336.7L309.7 286.4"/>
<path class="y" d="M576 510h2v2h-2zM381 181h2v2h-2z"/>
<path class="g" d="M241.1 602.7L305.4 629.3"/>
<path class="r" d="M712.3 463.2L779.1 446.8"/>
<path class="w" d="M178.1 625.6L166.4 628.6"/>
<path class="r" d="M240.4 402.9L309.8 386.8"/>
<path class="g" d="M714 222.2L782.1 245.7"/>
<path class="m" d="M178.1 625.6L187.6 629.6"/>
<path class="b" d="M711 563.2L711.7 513.3M512.5 229L512.8 178.5"/>
<path class="g" d="M443.2 495.4L509.1 521.2M245.3 162.2L309.6 185.3"/>
<path class="b" d="M240.8 503.2L240.6 453.1"/>
<path class="y" d="M313 345h2v2h-2z"/>
<path class="r" d="M643.3 630.4L710.4 613M443.9 294.9L512.2 279.4"/>
<path class="g" d="M645.4 388.1L713 413"/>
<path class="w" d="M642.8 635.9L632.8 631.9"/>
<path class="b" d="M443.6 395.5L443.7 345.3"/>
<path class="y" d="M708 568h2v2h-2zM513 239h2v2h-2z"/>
<path class="g" d="M176.4 328.2L240.3 352.6"/>
<path class="m" d="M642.8 635.9L654.1 632.9"/>
<path class="r" d="M647.5 186.8L714.7 171.8"/>
<path class="y" d="M245 509h2v2h-2z"/>
<path class="r" d="M374.7 462L443.4 445.5"/>
<path class="b" d="M845.1 622.2L846 572.3M646.5 287.8L647 237.4"/>
<path class="w" d="M642.8 635.9L642.6 651.1"/>
<path class="g" d="M576.7 554.1L643.8 580.4M378.6 220.8L444.1 244.3"/>
<path class="b" d="M374.6 562.1L374.6 512.1M175.9 227.6L175.6 177.1"/>
<path class="y" d="M445 403h2v2h-2z"/>
<path class="r" d="M578.4 353.9L645.9 338M305.4 629.3L374.5 611.9"/>
<path class="g" d="M779.1 446.8L847.8 472.1"/>
<path class="b" d="M577.5 454.4L578 404.2"/>
<path class="y" d="M644 297h2v2h-2z"/>
<path class="g" d="M309.8 386.8L374.8 411.7"/>
<path class="w" d="M310.1 634.8L300.5 630.8"/>
<path class="y" d="M377 567h2v2h-2z"/>
<path class="m" d="M642.8 635.9L642.9 620.6"/>
<path class="r" d="M509.1 521.2L577.1 504.3"/>
<path class="m" d="M310.1 634.8L321.7 631.9"/>
<path class="r" d="M309.6 185.3L378.7 170.4"/>
<path class="b" d="M780.6 346.6L781.4 296.2"/>
<path class="g" d="M710.4 613L778.6 639.7M512.2 279.4L578.8 303.4"/>
<path class="w" d="M642.8 635.9L631.5 638.8"/>
<path class="b" d="M508.6 621.1L508.9 571.2M309.7 286.4L309.7 235.9"/>
<path class="w" d="M310.1 634.8L310.1 650"/>
<path class="y" d="M577 461h2v2h-2zM381 132h2v2h-2z"/>
<path class="g" d="M241 553L305.4 579.2"/>
<path class="r" d="M713 413L779.8 396.8"/>
<path class="m" d="M642.8 635.9L652.8 639.8"/>
<path class="r" d="M240.3 352.6L309.8 336.7"/>
<path class="g" d="M714.7 171.8L782.9 195"/>
<path class="b" d="M711.7 513.3L712.3 463.2"/>
<path class="g" d="M443.4 445.5L509.4 470.9"/>
<path class="b" d="M240.6 453.1L240.4 402.9"/>
<path class="y" d="M509 625h2v2h-2zM313 296h2v2h-2z"/>
<path class="r" d="M643.8 580.4L711 563.2M444.1 244.3L512.5 229"/>
<path class="m" d="M310.1 634.8L310.1 619.5"/>
<path class="g" d="M645.9 338L713.6 362.5"/>
<path class="b" d="M642.7 680.2L643.3 630.4M443.7 345.3L443.9 294.9"/>
<path class="y" d="M709 519h2v2h-2zM513 189h2v2h-2z"/>
<path class="g" d="M374.5 611.9L440.1 638.6M176.2 278L240.1 302"/>
<path class="w" d="M310.1 634.8L298.5 637.7"/>
<path class="y" d="M245 460h2v2h-2z"/>
<path class="r" d="M374.8 411.7L443.6 395.5"/>
<path class="m" d="M310.1 634.8L319.7 638.8"/>
<path class="b" d="M846 572.3L846.9 522.3M647 237.4L647.5 186.8"/>
<path class="g" d="M577.1 504.3L644.3 530.2M378.7 170.4L444.3 193.6"/>
<path class="b" d="M374.6 512.1L374.7 462"/>
<path class="y" d="M445 354h2v2h-2z"/>
<path class="r" d="M778.6 639.7L845.1 622.2M578.8 303.4L646.5 287.8"/>
<path class="y" d="M177 624h2v2h-2z"/>
<path class="r" d="M305.4 579.2L374.6 562.1"/>
<path class="g" d="M779.8 396.8L848.7 421.8"/>
<path class="w" d="M776.1 645.1L765.9 641.1"/>
<path class="b" d="M578 404.2L578.4 353.9"/>
<path class="y" d="M645 247h2v2h-2z"/>
<path class="g" d="M309.8 336.7L374.8 361.2"/>
<path class="m" d="M776.1 645.1L787.3 642.1"/>
<path class="b" d="M305.5 679.1L305.4 629.3"/>
<path class="y" d="M377 518h2v2h-2z"/>
<path class="r" d="M509.4 470.9L577.5 454.4"/>
<path class="b" d="M781.4 296.2L782.1 245.7"/>
<path class="w" d="M776.1 645.1L775.8 660.3"/>
<path class="g" d="M711 563.2L779.4 589.6M512.5 229L579.2 252.7"/>
<path class="b" d="M508.9 571.2L509.1 521.2M309.7 235.9L309.6 185.3"/>
<path class="y" d="M577 412h2v2h-2z"/>
<path class="g" d="M240.8 503.2L305.3 529"/>
<path class="r" d="M713.6 362.5L780.6 346.6M440.1 638.6L508.6 621.1M240.1 302L309.7 286.4"/>
<path class="b" d="M712.3 463.2L713 413"/>
<path class="g" d="M443.6 395.5L509.7 420.5"/>
<path class="w" d="M442.7 644L432.9 640"/>
<path class="b" d="M240.4 402.9L240.3 352.6"/>
<path class="y" d="M509 576h2v2h-2z"/>
<path class="m" d="M776.1 645.1L776.3 629.8"/>
<path class="y" d="M313 246h2v2h-2z"/>
<path class="r" d="M644.3 530.2L711.7 513.3"/>
<path class="m" d="M442.7 644L454.2 641"/>
<path class="r" d="M444.3 193.6L512.8 178.5"/>
<path class="g" d="M845.1 622.2L914.6 649.1M646.5 287.8L714.3 311.9"/>
<path class="w" d="M776.1 645.1L764.8 648"/>
<path class="b" d="M643.3 630.4L643.8 580.4M443.9 294.9L444.1 244.3"/>
<path class="w" d="M442.7 644L442.6 659.3"/>
<path class="y" d="M709 470h2v2h-2zM513 140h2v2h-2z"/>
<path class="g" d="M374.6 562.1L440.2 588.5M175.9 227.6L239.9 251.3"/>
<path class="m" d="M776.1 645.1L786.2 649"/>
<path class="y" d="M245 410h2v2h-2z"/>
<path class="r" d="M374.8 361.2L443.7 345.3"/>
<path class="b" d="M846.9 522.3L847.8 472.1"/>
<path class="g" d="M577.5 454.4L644.8 479.9"/>
<path class="b" d="M374.7 462L374.8 411.7"/>
<path class="y" d="M641 634h2v2h-2zM445 304h2v2h-2z"/>
<path class="r" d="M779.4 589.6L846 572.3M579.2 252.7L647 237.4"/>
<path class="y" d="M176 575h2v2h-2z"/>
<path class="m" d="M442.7 644L442.7 628.7"/>
<path class="r" d="M305.3 529L374.6 512.1"/>
<path class="g" d="M780.6 346.6L849.6 371.2"/>
<path class="b" d="M777.8 689.6L778.6 639.7M578.4 353.9L578.8 303.4"/>
<path class="y" d="M645 198h2v2h-2z"/>
<path class="g" d="M508.6 621.1L575.3 648M309.7 286.4L374.9 310.6"/>
<path class="w" d="M442.7 644L431.1 646.9"/>
<path class="b" d="M305.4 629.3L305.4 579.2"/>
<path class="y" d="M377 469h2v2h-2z"/>
<path class="r" d="M509.7 420.5L578 404.2"/>
<path class="m" d="M442.7 644L452.5 648"/>
<path class="b" d="M782.1 245.7L782.9 195"/>
<path class="g" d="M711.7 513.3L780.1 539.3M512.8 178.5L579.6 201.8"/>
<path class="b" d="M509.1 521.2L509.4 470.9"/>
<path class="y" d="M577 362h2v2h-2z"/>
<path class="g" d="M240.6 453.1L305.2 478.7"/>
<path class="r" d="M714.3 311.9L781.4 296.2"/>
<path class="y" d="M309 633h2v2h-2z"/>
<path class="r" d="M440.2 588.5L508.9 571.2M239.9 251.3L309.7 235.9"/>
<path class="b" d="M713 413L713.6 362.5"/>
<path class="g" d="M443.7 345.3L510 369.9"/>
<path class="b" d="M439.9 688.6L440.1 638.6M240.3 352.6L240.1 302"/>
<path class="y" d="M509 527h2v2h-2zM313 196h2v2h-2z"/>
<path class="r" d="M644.8 479.9L712.3 463.2"/>
<path class="g" d="M846 572.3L915.6 598.9M647 237.4L715 261.1"/>
<path class="b" d="M643.8 580.4L644.3 530.2M444.1 244.3L444.3 193.6"/>
<path class="y" d="M710 420h2v2h-2z"/>
<path class="g" d="M374.6 512.1L440.4 538.2M175.6 177.1L239.7 200.4"/>
<path class="y" d="M244 361h2v2h-2z"/>
<path class="r" d="M575.3 648L643.3 630.4M374.9 310.6L443.9 294.9"/>
<path class="b" d="M847.8 472.1L848.7 421.8"/>
<path class="g" d="M578 404.2L645.4 429.4"/>
<path class="w" d="M575.9 653.2L566 649.2"/>
<path class="b" d="M374.8 411.7L374.8 361.2"/>
<path class="y" d="M642 585h2v2h-2zM445 254h2v2h-2z"/>
<path class="r" d="M780.1 539.3L846.9 522.3"/>
<path class="m" d="M575.9 653.2L587.3 650.3"/>
<path class="r" d="M579.6 201.8L647.5 186.8"/>
<path class="y" d="M176 526h2v2h-2z"/>
<path class="r" d="M305.2 478.7L374.7 462"/>
<path class="g" d="M781.4 296.2L850.5 320.5"/>
<path class="b" d="M778.6 639.7L779.4 589.6M578.8 303.4L579.2 252.7"/>
<path class="w" d="M575.9 653.2L575.8 668.5"/>
<path class="y" d="M646 148h2v2h-2z"/>
<path class="g" d="M508.9 571.2L575.7 597.7M309.7 235.9L374.9 259.8"/>
<path class="b" d="M305.4 579.2L305.3 529"/>
<path class="y" d="M377 419h2v2h-2z"/>
<path class="r" d="M510 369.9L578.4 353.9"/>
<path class="g" d="M712.3 463.2L780.9 488.9"/>
<path class="b" d="M509.4 470.9L509.7 420.5"/>
<path class="y" d="M775 644h2v2h-2zM578 312h2v2h-2z"/>
<path class="g" d="M240.4 402.9L305.2 428.1"/>
<path class="r" d="M715 261.1L782.1 245.7"/>
<path class="w" d="M241.3 652.2L231.8 648.2"/>
<path class="y" d="M309 584h2v2h-2z"/>
<path class="m" d="M575.9 653.2L576 637.9"/>
<path class="r" d="M440.4 538.2L509.1 521.2"/>
<path class="m" d="M241.3 652.2L253.1 649.2"/>
<path class="r" d="M239.7 200.4L309.6 185.3"/>
<path class="b" d="M913.6 699.1L914.6 649.1M713.6 362.5L714.3 311.9"/>
<path class="g" d="M643.3 630.4L711.3 657.4M443.9 294.9L510.3 319.2"/>
<path class="w" d="M575.9 653.2L564.5 656.2"/>
<path class="b" d="M440.1 638.6L440.2 588.5M240.1 302L239.9 251.3"/>
<path class="w" d="M241.3 652.2L241.4 667.5"/>
<path class="y" d="M510 477h2v2h-2zM313 146h2v2h-2z"/>
<path class="r" d="M645.4 429.4L713 413"/>
<path class="m" d="M575.9 653.2L585.9 657.2"/>
<path class="g" d="M846.9 522.3L916.6 548.5M647.5 186.8L715.6 210.2"/>
<path class="b" d="M644.3 530.2L644.8 479.9"/>
<path class="y" d="M711 371h2v2h-2z"/>
<path class="g" d="M374.7 462L440.6 487.7"/>
<path class="y" d="M441 642h2v2h-2zM244 311h2v2h-2z"/>
<path class="r" d="M575.7 597.7L643.8 580.4M374.9 259.8L444.1 244.3"/>
<path class="b" d="M848.7 421.8L849.6 371.2"/>
<path class="m" d="M241.3 652.2L241.3 636.8"/>
<path class="g" d="M578.4 353.9L645.9 378.7"/>
<path class="b" d="M574.9 698L575.3 648M374.8 361.2L374.9 310.6"/>
<path class="y" d="M642 536h2v2h-2zM445 204h2v2h-2z"/>
<path class="g" d="M305.4 629.3L370.8 656.3"/>
<path class="r" d="M780.9 488.9L847.8 472.1"/>
<path class="w" d="M241.3 652.2L229.5 655.1"/>
<path class="y" d="M176 476h2v2h-2z"/>
<path class="r" d="M305.2 428.1L374.8 411.7"/>
<path class="g" d="M782.1 245.7L851.4 269.6"/>
<path class="m" d="M241.3 652.2L250.9 656.2"/>
<path class="b" d="M779.4 589.6L780.1 539.3M579.2 252.7L579.6 201.8"/>
<path class="g" d="M509.1 521.2L576.2 547.3M309.6 185.3L375 208.7"/>
<path class="b" d="M305.3 529L305.2 478.7"/>
<path class="y" d="M377 369h2v2h-2z"/>
<path class="r" d="M711.3 657.4L778.6 639.7M510.3 319.2L578.8 303.4"/>
<path class="g" d="M713 413L781.7 438.3"/>
<path class="w" d="M709.8 662.5L699.7 658.5"/>
<path class="b" d="M509.7 420.5L510 369.9"/>
<path class="y" d="M775 594h2v2h-2zM578 262h2v2h-2z"/>
<path class="g" d="M240.3 352.6L305.1 377.4"/>
<path class="m" d="M709.8 662.5L721.1 659.5"/>
<path class="r" d="M715.6 210.2L782.9 195"/>
<path class="y" d="M308 535h2v2h-2z"/>
<path class="r" d="M440.6 487.7L509.4 470.9"/>
<path class="b" d="M914.6 649.1L915.6 598.9M714.3 311.9L715 261.1"/>
<path class="w" d="M709.8 662.5L709.6 677.8"/>
<path class="g" d="M643.8 580.4L711.9 607M444.1 244.3L510.6 268.2"/>
<path class="b" d="M440.2 588.5L440.4 538.2M239.9 251.3L239.7 200.4"/>
<path class="y" d="M510 428h2v2h-2z"/>
<path class="r" d="M645.9 378.7L713.6 362.5M370.8 656.3L440.1 638.6"/>
<path class="g" d="M847.8 472.1L917.6 497.9"/>
<path class="b" d="M644.8 479.9L645.4 429.4"/>
<path class="y" d="M711 321h2v2h-2z"/>
<path class="g" d="M374.8 411.7L440.7 437"/>
<path class="w" d="M374.5 661.5L364.7 657.4"/>
<path class="y" d="M441 593h2v2h-2z"/>
<path class="m" d="M709.8 662.5L710 647.2"/>
<path class="y" d="M244 261h2v2h-2z"/>
<path class="r" d="M576.2 547.3L644.3 530.2"/>
<path class="m" d="M374.5 661.5L386.1 658.5"/>
<path class="r" d="M375 208.7L444.3 193.6"/>
<path class="b" d="M849.6 371.2L850.5 320.5"/>
<path class="g" d="M778.6 639.7L847.9 666.9M578.8 303.4L646.5 327.8"/>
<path class="w" d="M709.8 662.5L698.4 665.5"/>
<path class="b" d="M575.3 648L575.7 597.7M374.9 310.6L374.9 259.8"/>
<path class="w" d="M374.5 661.5L374.5 676.8"/>
<path class="y" d="M643 486h2v2h-2zM446 154h2v2h-2z"/>
<path class="g" d="M305.4 579.2L370.8 605.9"/>
<path class="r" d="M781.7 438.3L848.7 421.8"/>
<path class="m" d="M709.8 662.5L719.9 666.6"/>
<path class="y" d="M176 427h2v2h-2z"/>
<path class="r" d="M305.1 377.4L374.8 361.2"/>
<path class="g" d="M782.9 195L852.3 218.6"/>
<path class="b" d="M780.1 539.3L780.9 488.9"/>
<path class="g" d="M509.4 470.9L576.6 496.7"/>
<path class="b" d="M305.2 478.7L305.2 428.1"/>
<path class="y" d="M574 652h2v2h-2zM377 320h2v2h-2z"/>
<path class="r" d="M711.9 607L779.4 589.6M510.6 268.2L579.2 252.7"/>
<path class="m" d="M374.5 661.5L374.5 646.1"/>
<path class="g" d="M713.6 362.5L782.5 387.5"/>
<path class="b" d="M710.6 707.6L711.3 657.4M510 369.9L510.3 319.2"/>
<path class="y" d="M776 545h2v2h-2zM579 212h2v2h-2z"/>
<path class="g" d="M440.1 638.6L506.6 665.8M240.1 302L305 326.5"/>
<path class="w" d="M374.5 661.5L362.8 664.4"/>
<path class="y" d="M308 485h2v2h-2z"/>
<path class="r" d="M440.7 437L509.7 420.5"/>
<path class="m" d="M374.5 661.5L384.2 665.5"/>
<path class="b" d="M915.6 598.9L916.6 548.5M715 261.1L715.6 210.2"/>
<path class="g" d="M644.3 530.2L712.6 556.5M444.3 193.6L510.9 217.1"/>
<path class="b" d="M440.4 538.2L440.6 487.7"/>
<path class="y" d="M510 378h2v2h-2z"/>
<path class="r" d="M847.9 666.9L914.6 649.1M646.5 327.8L714.3 311.9"/>
<path class="y" d="M240 651h2v2h-2z"/>
<path class="r" d="M370.8 605.9L440.2 588.5"/>
<path class="g" d="M848.7 421.8L918.6 447.2"/>
<path class="w" d="M844.3 671.8L834 667.8"/>
<path class="b" d="M645.4 429.4L645.9 378.7"/>
<path class="y" d="M712 271h2v2h-2z"/>
<path class="g" d="M374.8 361.2L440.9 386.2"/>
<path class="m" d="M844.3 671.8L855.5 668.8"/>
<path class="b" d="M370.7 706.5L370.8 656.3"/>
<path class="y" d="M442 544h2v2h-2zM244 211h2v2h-2z"/>
<path class="r" d="M576.6 496.7L644.8 479.9"/>
<path class="b" d="M850.5 320.5L851.4 269.6"/>
<path class="w" d="M844.3 671.8L844 687.2"/>
<path class="g" d="M779.4 589.6L848.8 616.4M579.2 252.7L647 276.8"/>
<path class="b" d="M575.7 597.7L576.2 547.3M374.9 259.8L375 208.7"/>
<path class="y" d="M643 436h2v2h-2z"/>
<path class="g" d="M305.3 529L370.9 555.4"/>
<path class="r" d="M782.5 387.5L849.6 371.2"/>
<path class="y" d="M175 377h2v2h-2z"/>
<path class="r" d="M506.6 665.8L575.3 648M305 326.5L374.9 310.6"/>
<path class="b" d="M780.9 488.9L781.7 438.3"/>
<path class="g" d="M509.7 420.5L577 446"/>
<path class="w" d="M508.3 670.8L498.4 666.7"/>
<path class="b" d="M305.2 428.1L305.1 377.4"/>
<path class="y" d="M575 602h2v2h-2z"/>
<path class="m" d="M844.3 671.8L844.5 656.5"/>
<path class="y" d="M377 269h2v2h-2z"/>
<path class="r" d="M712.6 556.5L780.1 539.3"/>
<path class="m" d="M508.3 670.8L519.8 667.8"/>
<path class="r" d="M510.9 217.1L579.6 201.8"/>
<path class="g" d="M914.6 649.1L985.2 676.4M714.3 311.9L783.2 336.5"/>
<path class="w" d="M844.3 671.8L833 674.9"/>
<path class="b" d="M711.3 657.4L711.9 607M510.3 319.2L510.6 268.2"/>
<path class="w" d="M508.3 670.8L508.2 686.2"/>
<path class="y" d="M777 495h2v2h-2zM579 162h2v2h-2z"/>
<path class="g" d="M440.2 588.5L506.9 615.3M239.9 251.3L305 275.4"/>
<path class="m" d="M844.3 671.8L854.6 675.9"/>
<path class="y" d="M308 435h2v2h-2z"/>
<path class="r" d="M440.9 386.2L510 369.9"/>
<path class="b" d="M916.6 548.5L917.6 497.9"/>
<path class="g" d="M644.8 479.9L713.2 505.8"/>
<path class="b" d="M440.6 487.7L440.7 437"/>
<path class="y" d="M708 661h2v2h-2zM510 328h2v2h-2z"/>
<path class="r" d="M848.8 616.4L915.6 598.9M647 276.8L715 261.1"/>
<path class="y" d="M240 601h2v2h-2z"/>
<path class="m" d="M508.3 670.8L508.4 655.4"/>
<path class="r" d="M370.9 555.4L440.4 538.2"/>
<path class="g" d="M849.6 371.2L919.7 396.3"/>
<path class="b" d="M847 717.1L847.9 666.9M645.9 378.7L646.5 327.8"/>
<path class="y" d="M713 221h2v2h-2z"/>
<path class="g" d="M575.3 648L643.2 675.3M374.9 310.6L441.1 335.1"/>
<path class="w" d="M508.3 670.8L496.7 673.8"/>
<path class="b" d="M370.8 656.3L370.8 605.9"/>
<path class="y" d="M442 494h2v2h-2zM244 161h2v2h-2z"/>
<path class="r" d="M577 446L645.4 429.4"/>
<path class="m" d="M508.3 670.8L518.2 674.9"/>
<path class="b" d="M851.4 269.6L852.3 218.6"/>
<path class="g" d="M780.1 539.3L849.7 565.8M579.6 201.8L647.5 225.5"/>
<path class="b" d="M576.2 547.3L576.6 496.7"/>
<path class="y" d="M644 387h2v2h-2z"/>
<path class="g" d="M305.2 478.7L370.9 504.6"/>
<path class="r" d="M783.2 336.5L850.5 320.5"/>
<path class="y" d="M373 660h2v2h-2zM175 327h2v2h-2z"/>
<path class="r" d="M506.9 615.3L575.7 597.7M305 275.4L374.9 259.8"/>
<path class="b" d="M781.7 438.3L782.5 387.5"/>
<path class="g" d="M510 369.9L577.4 395"/>
<path class="b" d="M506.4 716.1L506.6 665.8M305.1 377.4L305 326.5"/>
<path class="y" d="M575 553h2v2h-2zM377 219h2v2h-2z"/>
<path class="r" d="M713.2 505.8L780.9 488.9"/>
<path class="g" d="M915.6 598.9L986.3 625.8M715 261.1L784 285.3"/>
<path class="b" d="M711.9 607L712.6 556.5M510.6 268.2L510.9 217.1"/>
<path class="y" d="M778 445h2v2h-2z"/>
<path class="g" d="M440.4 538.2L507.2 564.6M239.7 200.4L304.9 224.1"/>
<path class="y" d="M308 385h2v2h-2z"/>
<path class="r" d="M643.2 675.3L711.3 657.4M441.1 335.1L510.3 319.2"/>
<path class="b" d="M917.6 497.9L918.6 447.2"/>
<path class="g" d="M645.4 429.4L713.9 454.9"/>
<path class="w" d="M642.7 680.2L632.6 676.1"/>
<path class="b" d="M440.7 437L440.9 386.2"/>
<path class="y" d="M709 611h2v2h-2zM511 278h2v2h-2z"/>
<path class="r" d="M849.7 565.8L916.6 548.5"/>
<path class="m" d="M642.7 680.2L654.2 677.2"/>
<path class="r" d="M647.5 225.5L715.6 210.2"/>
<path class="y" d="M239 551h2v2h-2z"/>
<path class="r" d="M370.9 504.6L440.6 487.7"/>
<path class="g" d="M850.5 320.5L920.7 345.2"/>
<path class="b" d="M847.9 666.9L848.8 616.4M646.5 327.8L647 276.8"/>
<path class="w" d="M642.7 680.2L642.6 695.6"/>
<path class="y" d="M713 170h2v2h-2z"/>
<path class="g" d="M575.7 597.7L643.7 624.7M374.9 259.8L441.3 283.9"/>
<path class="b" d="M370.8 605.9L370.9 555.4"/>
<path class="y" d="M442 444h2v2h-2z"/>
<path class="r" d="M577.4 395L645.9 378.7"/>
<path class="g" d="M780.9 488.9L850.6 515"/>
<path class="b" d="M576.6 496.7L577 446"/>
<path class="y" d="M843 670h2v2h-2zM644 337h2v2h-2z"/>
<path class="g" d="M305.2 428.1L371 453.7"/>
<path class="r" d="M784 285.3L851.4 269.6"/>
<path class="w" d="M305.5 679.1L295.8 675.1"/>
<path class="y" d="M373 610h2v2h-2z"/>
<path class="m" d="M642.7 680.2L642.9 664.8"/>
<path class="y" d="M175 276h2v2h-2z"/>
<path class="r" d="M507.2 564.6L576.2 547.3"/>
<path class="m" d="M305.5 679.1L317.3 676.1"/>
<path class="r" d="M304.9 224.1L375 208.7"/>
<path class="b" d="M984 726.7L985.2 676.4M782.5 387.5L783.2 336.5"/>
<path class="g" d="M711.3 657.4L780.4 684.9M510.3 319.2L577.8 343.9"/>
<path class="w" d="M642.7 680.2L631.3 683.2"/>
<path class="b" d="M506.6 665.8L506.9 615.3M305 326.5L305 275.4"/>
<path class="w" d="M305.5 679.1L305.5 694.5"/>
<path class="y" d="M576 503h2v2h-2zM377 169h2v2h-2z"/>
<path class="r" d="M713.9 454.9L781.7 438.3"/>
<path class="m" d="M642.7 680.2L652.8 684.3"/>
<path class="g" d="M916.6 548.5L987.5 575.1M715.6 210.2L784.8 234"/>
<path class="b" d="M712.6 556.5L713.2 505.8"/>
<path class="y" d="M778 395h2v2h-2z"/>
<path class="g" d="M440.6 487.7L507.5 513.8"/>
<path class="y" d="M507 669h2v2h-2zM308 335h2v2h-2z"/>
<path class="r" d="M643.7 624.7L711.9 607M441.3 283.9L510.6 268.2"/>
<path class="b" d="M918.6 447.2L919.7 396.3"/>
<path class="m" d="M305.5 679.1L305.5 663.7"/>
<path class="g" d="M645.9 378.7L714.6 403.9"/>
<path class="b" d="M642.7 725.7L643.2 675.3M440.9 386.2L441.1 335.1"/>
<path class="y" d="M710 562h2v2h-2zM511 228h2v2h-2z"/>
<path class="g" d="M370.8 656.3L437.2 683.8"/>
<path class="r" d="M850.6 515L917.6 497.9"/>
<path class="w" d="M305.5 679.1L293.7 682.1"/>
<path class="y" d="M239 502h2v2h-2z"/>
<path class="r" d="M371 453.7L440.7 437"/>
<path class="g" d="M851.4 269.6L921.7 293.9"/>
<path class="m" d="M305.5 679.1L315.2 683.2"/>
<path class="b" d="M848.8 616.4L849.7 565.8M647 276.8L647.5 225.5"/>
<path class="g" d="M576.2 547.3L644.3 573.9M375 208.7L441.5 232.6"/>
<path class="b" d="M370.9 555.4L370.9 504.6"/>
<path class="y" d="M442 394h2v2h-2z"/>
<path class="r" d="M780.4 684.9L847.9 666.9M577.8 343.9L646.5 327.8"/>
<path class="g" d="M781.7 438.3L851.5 464"/>
<path class="w" d="M777.8 689.6L767.5 685.5"/>
<path class="b" d="M577 446L577.4 395"/>
<path class="y" d="M844 621h2v2h-2zM645 286h2v2h-2z"/>
<path class="g" d="M305.1 377.4L371 402.6"/>
<path class="m" d="M777.8 689.6L789.2 686.6"/>
<path class="r" d="M784.8 234L852.3 218.6"/>
<path class="y" d="M373 561h2v2h-2zM174 226h2v2h-2z"/>
<path class="r" d="M507.5 513.8L576.6 496.7"/>
<path class="b" d="M985.2 676.4L986.3 625.8M783.2 336.5L784 285.3"/>
<path class="w" d="M777.8 689.6L777.6 705"/>
<path class="g" d="M711.9 607L781.2 634.1M510.6 268.2L578.2 292.6"/>
<path class="b" d="M506.9 615.3L507.2 564.6M305 275.4L304.9 224.1"/>
<path class="y" d="M576 453h2v2h-2z"/>
<path class="r" d="M714.6 403.9L782.5 387.5M437.2 683.8L506.6 665.8"/>
<path class="g" d="M917.6 497.9L988.6 524.2"/>
<path class="b" d="M713.2 505.8L713.9 454.9"/>
<path class="y" d="M779 345h2v2h-2z"/>
<path class="g" d="M440.7 437L507.8 462.7"/>
<path class="w" d="M439.9 688.6L430 684.5"/>
<path class="y" d="M507 620h2v2h-2z"/>
<path class="m" d="M777.8 689.6L778.1 674.1"/>
<path class="y" d="M308 285h2v2h-2z"/>
<path class="r" d="M644.3 573.9L712.6 556.5"/>
<path class="m" d="M439.9 688.6L451.6 685.5"/>
<path class="r" d="M441.5 232.6L510.9 217.1"/>
<path class="b" d="M919.7 396.3L920.7 345.2"/>
<path class="g" d="M847.9 666.9L918.3 694.5M646.5 327.8L715.2 352.6"/>
<path class="w" d="M777.8 689.6L766.5 692.6"/>
<path class="b" d="M643.2 675.3L643.7 624.7M441.1 335.1L441.3 283.9"/>
<path class="w" d="M439.9 688.6L439.8 704"/>
<path class="y" d="M710 512h2v2h-2zM511 177h2v2h-2z"/>
<path class="g" d="M370.8 605.9L437.3 633"/>
<path class="r" d="M851.5 464L918.6 447.2"/>
<path class="m" d="M777.8 689.6L788.1 693.7"/>
<path class="y" d="M239 452h2v2h-2z"/>
<path class="a" d="M174 174.2L197.4 169L197.1 167.5L219.1 167.6L199.6 176.6L198.2 175.1L175.2 179.6z"/>
<path class="r" d="M371 402.6L440.9 386.2"/>
<path class="g" d="M852.3 218.6L922.8 242.5"/>
<path class="b" d="M849.7 565.8L850.6 515"/>
<path class="g" d="M576.6 496.7L644.8 523"/>
<path class="b" d="M370.9 504.6L371 453.7"/>
<path class="y" d="M641 679h2v2h-2zM442 344h2v2h-2z"/>
<path class="r" d="M781.2 634.1L848.8 616.4M578.2 292.6L647 276.8"/>
<path class="m" d="M439.9 688.6L439.9 673.1"/>
<path class="g" d="M782.5 387.5L852.4 412.8"/>
<path class="b" d="M779.6 735.4L780.4 684.9M577.4 395L577.8 343.9"/>
<path class="y" d="M845 571h2v2h-2zM645 236h2v2h-2z"/>
<path class="g" d="M506.6 665.8L574.3 693.4M305 326.5L371.1 351.3"/>
<path class="w" d="M439.9 688.6L428.2 691.6"/>
<path class="y" d="M373 511h2v2h-2zM174 176h2v2h-2z"/>
<path class="r" d="M507.8 462.7L577 446"/>
<path class="m" d="M439.9 688.6L449.8 692.7"/>
<path class="b" d="M986.3 625.8L987.5 575.1M784 285.3L784.8 234"/>
<path class="g" d="M712.6 556.5L782 583.3M510.9 217.1L578.7 241.1"/>
<path class="b" d="M507.2 564.6L507.5 513.8"/>
<path class="y" d="M576 403h2v2h-2z"/>
<path class="r" d="M918.3 694.5L985.2 676.4M715.2 352.6L783.2 336.5"/>
<path class="y" d="M304 678h2v2h-2z"/>
<path class="r" d="M437.3 633L506.9 615.3"/>
<path class="g" d="M918.6 447.2L989.8 473.1"/>
<path class="w" d="M913.6 699.1L903.1 695"/>
<path class="b" d="M713.9 454.9L714.6 403.9"/>
<path class="y" d="M780 295h2v2h-2z"/>
<path class="g" d="M440.9 386.2L508.1 411.5"/>
<path class="m" d="M913.6 699.1L924.8 696"/>
<path class="b" d="M437 734.4L437.2 683.8"/>
<path class="y" d="M507 570h2v2h-2zM308 234h2v2h-2z"/>
<path class="r" d="M644.8 523L713.2 505.8"/>
<path class="b" d="M920.7 345.2L921.7 293.9"/>
<path class="w" d="M913.6 699.1L913.3 714.5"/>
<path class="g" d="M848.8 616.4L919.4 643.6M647 276.8L715.9 301.2"/>
<path class="b" d="M643.7 624.7L644.3 573.9M441.3 283.9L441.5 232.6"/>
<path class="y" d="M711 462h2v2h-2z"/>
<path class="g" d="M370.9 555.4L437.5 582.1"/>
<path class="r" d="M852.4 412.8L919.7 396.3"/>
<path class="y" d="M239 401h2v2h-2z"/>
<path class="r" d="M574.3 693.4L643.2 675.3M371.1 351.3L441.1 335.1"/>
<path class="b" d="M850.6 515L851.5 464"/>
<path class="g" d="M577 446L645.4 471.8"/>
<path class="w" d="M574.9 698L564.9 693.9"/>
<path class="b" d="M371 453.7L371 402.6"/>
<path class="y" d="M642 629h2v2h-2z"/>
<path class="m" d="M913.6 699.1L913.9 683.6"/>
<path class="y" d="M442 293h2v2h-2z"/>
<path class="r" d="M782 583.3L849.7 565.8"/>
<path class="m" d="M574.9 698L586.5 695"/>
<path class="r" d="M578.7 241.1L647.5 225.5"/>
<path class="g" d="M985.2 676.4L1056.9 704.1M783.2 336.5L853.3 361.5"/>
<path class="w" d="M913.6 699.1L902.3 702.1"/>
<path class="b" d="M780.4 684.9L781.2 634.1M577.8 343.9L578.2 292.6"/>
<path class="w" d="M574.9 698L574.8 713.5"/>
<path class="y" d="M845 521h2v2h-2zM646 185h2v2h-2z"/>
<path class="g" d="M506.9 615.3L574.8 642.5M305 275.4L371.1 299.8"/>
<path class="m" d="M913.6 699.1L924.1 703.2"/>
<path class="y" d="M373 461h2v2h-2z"/>
<path class="r" d="M508.1 411.5L577.4 395"/>
<path class="b" d="M987.5 575.1L988.6 524.2"/>
<path class="g" d="M713.2 505.8L782.8 532.2"/>
<path class="b" d="M507.5 513.8L507.8 462.7"/>
<path class="y" d="M776 688h2v2h-2zM577 352h2v2h-2z"/>
<path class="r" d="M919.4 643.6L986.3 625.8M715.9 301.2L784 285.3"/>
<path class="y" d="M304 628h2v2h-2z"/>
<path class="m" d="M574.9 698L575.1 682.5"/>
<path class="r" d="M437.5 582.1L507.2 564.6"/>
<path class="g" d="M919.7 396.3L990.9 421.8"/>
<path class="b" d="M917.3 745.1L918.3 694.5M714.6 403.9L715.2 352.6"/>
<path class="y" d="M781 244h2v2h-2z"/>
<path class="g" d="M643.2 675.3L712.2 703.1M441.1 335.1L508.4 360.1"/>
<path class="w" d="M574.9 698L563.3 701.1"/>
<path class="b" d="M437.2 683.8L437.3 633"/>
<path class="y" d="M508 520h2v2h-2zM308 184h2v2h-2z"/>
<path class="r" d="M645.4 471.8L713.9 454.9"/>
<path class="m" d="M574.9 698L585 702.2"/>
<path class="b" d="M921.7 293.9L922.8 242.5"/>
<path class="g" d="M849.7 565.8L920.4 592.7M647.5 225.5L716.6 249.6"/>
<path class="b" d="M644.3 573.9L644.8 523"/>
<path class="y" d="M711 411h2v2h-2z"/>
<path class="g" d="M370.9 504.6L437.7 531"/>
<path class="r" d="M853.3 361.5L920.7 345.2"/>
<path class="y" d="M438 687h2v2h-2zM239 351h2v2h-2z"/>
<path class="r" d="M574.8 642.5L643.7 624.7M371.1 299.8L441.3 283.9"/>
<path class="b" d="M851.5 464L852.4 412.8"/>
<path class="g" d="M577.4 395L645.9 420.5"/>
<path class="b" d="M573.9 744.1L574.3 693.4M371 402.6L371.1 351.3"/>
<path class="y" d="M642 579h2v2h-2zM443 243h2v2h-2z"/>
<path class="r" d="M782.8 532.2L850.6 515"/>
<path class="g" d="M986.3 625.8L1058.2 653.2M784 285.3L854.2 309.9"/>
<path class="b" d="M781.2 634.1L782 583.3M578.2 292.6L578.7 241.1"/>
<path class="y" d="M846 471h2v2h-2z"/>
<path class="g" d="M507.2 564.6L575.2 591.5M304.9 224.1L371.2 248.2"/>
<path class="y" d="M373 410h2v2h-2z"/>
<path class="r" d="M712.2 703.1L780.4 684.9M508.4 360.1L577.8 343.9"/>
<path class="b" d="M988.6 524.2L989.8 473.1"/>
<path class="g" d="M713.9 454.9L783.6 480.9"/>
<path class="w" d="M710.6 707.6L700.4 703.4"/>
<path class="b" d="M507.8 462.7L508.1 411.5"/>
<path class="y" d="M777 638h2v2h-2zM577 302h2v2h-2z"/>
<path class="r" d="M920.4 592.7L987.5 575.1"/>
<path class="m" d="M710.6 707.6L722.1 704.5"/>
<path class="r" d="M716.6 249.6L784.8 234"/>
<path class="y" d="M304 578h2v2h-2z"/>
<path class="r" d="M437.7 531L507.5 513.8"/>
<path class="g" d="M920.7 345.2L992.1 370.3"/>
<path class="b" d="M918.3 694.5L919.4 643.6M715.2 352.6L715.9 301.2"/>
<path class="w" d="M710.6 707.6L710.4 723.1"/>
<path class="y" d="M781 194h2v2h-2z"/>
<path class="g" d="M643.7 624.7L712.8 652.1M441.3 283.9L508.7 308.5"/>
<path class="b" d="M437.3 633L437.5 582.1"/>
<path class="y" d="M508 469h2v2h-2z"/>
<path class="r" d="M645.9 420.5L714.6 403.9"/>
<path class="g" d="M850.6 515L921.4 541.5"/>
<path class="b" d="M644.8 523L645.4 471.8"/>
<path class="y" d="M912 698h2v2h-2zM712 361h2v2h-2z"/>
<path class="g" d="M371 453.7L437.9 479.7"/>
<path class="r" d="M854.2 309.9L921.7 293.9"/>
<path class="w" d="M370.7 706.5L360.9 702.4"/>
<path class="y" d="M439 637h2v2h-2z"/>
<path class="m" d="M710.6 707.6L710.8 692"/>
<path class="y" d="M239 301h2v2h-2z"/>
<path class="r" d="M575.2 591.5L644.3 573.9"/>
<path class="m" d="M370.7 706.5L382.5 703.4"/>
<path class="r" d="M371.2 248.2L441.5 232.6"/>
<path class="b" d="M1055.6 754.9L1056.9 704.1M852.4 412.8L853.3 361.5"/>
<path class="g" d="M780.4 684.9L850.7 712.8M577.8 343.9L646.4 369"/>
<path class="w" d="M710.6 707.6L699.1 710.6"/>
<path class="b" d="M574.3 693.4L574.8 642.5M371.1 351.3L371.1 299.8"/>
<path class="w" d="M370.7 706.5L370.7 722"/>
<path class="y" d="M643 529h2v2h-2zM443 192h2v2h-2z"/>
<path class="r" d="M783.6 480.9L851.5 464"/>
<path class="m" d="M710.6 707.6L720.9 711.7"/>
<path class="g" d="M987.5 575.1L1059.5 602.1M784.8 234L855.2 258.2"/>
<path class="b" d="M782 583.3L782.8 532.2"/>
<path class="y" d="M847 420h2v2h-2z"/>
<path class="g" d="M507.5 513.8L575.6 540.3"/>
<path class="y" d="M573 697h2v2h-2zM373 360h2v2h-2z"/>
<path class="r" d="M712.8 652.1L781.2 634.1M508.7 308.5L578.2 292.6"/>
<path class="b" d="M989.8 473.1L990.9 421.8"/>
<path class="m" d="M370.7 706.5L370.7 691"/>
<path class="g" d="M714.6 403.9L784.4 429.5"/>
<path class="b" d="M711.5 753.9L712.2 703.1M508.1 411.5L508.4 360.1"/>
<path class="y" d="M778 588h2v2h-2zM578 251h2v2h-2z"/>
<path class="g" d="M437.2 683.8L504.7 711.7"/>
<path class="r" d="M921.4 541.5L988.6 524.2"/>
<path class="w" d="M370.7 706.5L358.9 709.6"/>
<path class="y" d="M304 528h2v2h-2z"/>
<path class="r" d="M437.9 479.7L507.8 462.7"/>
<path class="g" d="M921.7 293.9L993.3 318.7"/>
<path class="m" d="M370.7 706.5L380.6 710.7"/>
<path class="b" d="M919.4 643.6L920.4 592.7M715.9 301.2L716.6 249.6"/>
<path class="g" d="M644.3 573.9L713.5 600.9M441.5 232.6L509 256.8"/>
<path class="b" d="M437.5 582.1L437.7 531"/>
<path class="y" d="M508 419h2v2h-2z"/>
<path class="r" d="M850.7 712.8L918.3 694.5M646.4 369L715.2 352.6"/>
<path class="g" d="M851.5 464L922.5 490.1"/>
<path class="w" d="M847 717.1L836.6 713"/>
<path class="b" d="M645.4 471.8L645.9 420.5"/>
<path class="y" d="M913 648h2v2h-2zM713 310h2v2h-2z"/>
<path class="g" d="M371 402.6L438 428.2"/>
<path class="m" d="M847 717.1L858.4 714"/>
<path class="r" d="M855.2 258.2L922.8 242.5"/>
<path class="y" d="M439 587h2v2h-2zM238 250h2v2h-2z"/>
<path class="r" d="M575.6 540.3L644.8 523"/>
<path class="b" d="M1056.9 704.1L1058.2 653.2M853.3 361.5L854.2 309.9"/>
<path class="w" d="M847 717.1L846.7 732.7"/>
<path class="g" d="M781.2 634.1L851.6 661.7M578.2 292.6L647 317.3"/>
<path class="b" d="M574.8 642.5L575.2 591.5M371.1 299.8L371.2 248.2"/>
<path class="y" d="M643 478h2v2h-2z"/>
<path class="r" d="M784.4 429.5L852.4 412.8M504.7 711.7L574.3 693.4"/>
<path class="g" d="M988.6 524.2L1060.8 550.8"/>
<path class="b" d="M782.8 532.2L783.6 480.9"/>
<path class="y" d="M848 370h2v2h-2z"/>
<path class="g" d="M507.8 462.7L576 488.9"/>
<path class="w" d="M506.4 716.1L496.3 711.9"/>
<path class="y" d="M574 646h2v2h-2z"/>
<path class="m" d="M847 717.1L847.3 701.6"/>
<path class="y" d="M373 309h2v2h-2z"/>
<path class="r" d="M713.5 600.9L782 583.3"/>
<path class="m" d="M506.4 716.1L518.1 713"/>
<path class="r" d="M509 256.8L578.7 241.1"/>
<path class="b" d="M990.9 421.8L992.1 370.3"/>
<path class="g" d="M918.3 694.5L989.9 722.5M715.2 352.6L785.2 377.9"/>
<path class="w" d="M847 717.1L835.6 720.2"/>
<path class="b" d="M712.2 703.1L712.8 652.1M508.4 360.1L508.7 308.5"/>
<path class="w" d="M506.4 716.1L506.3 731.7"/>
<path class="y" d="M779 538h2v2h-2zM578 200h2v2h-2z"/>
<path class="g" d="M437.3 633L505 660.6"/>
<path class="r" d="M922.5 490.1L989.8 473.1"/>
<path class="m" d="M847 717.1L857.5 721.3"/>
<path class="y" d="M304 477h2v2h-2z"/>
<path class="a" d="M238.2 197.5L291.9 185.7L291.6 184.2L313.6 184.2L294 193.3L292.7 191.8L239.4 202.9z"/>
<path class="r" d="M438 428.2L508.1 411.5"/>
<path class="g" d="M922.8 242.5L994.4 266.8"/>
<path class="b" d="M920.4 592.7L921.4 541.5"/>
<path class="g" d="M644.8 523L714.2 549.6"/>
<path class="b" d="M437.7 531L437.9 479.7"/>
<path class="y" d="M709 706h2v2h-2zM509 368h2v2h-2z"/>
<path class="r" d="M851.6 661.7L919.4 643.6M647 317.3L715.9 301.2"/>
<path class="m" d="M506.4 716.1L506.4 700.5"/>
<path class="g" d="M852.4 412.8L923.5 438.6"/>
<path class="b" d="M849.8 763.7L850.7 712.8M645.9 420.5L646.4 369"/>
<path class="y" d="M914 597h2v2h-2zM713 260h2v2h-2z"/>
<path class="g" d="M574.3 693.4L643.1 721.5M371.1 351.3L438.2 376.6"/>
<path class="w" d="M506.4 716.1L494.6 719.2"/>
<path class="y" d="M439 537h2v2h-2zM238 199h2v2h-2z"/>
<path class="r" d="M576 488.9L645.4 471.8"/>
<path class="m" d="M506.4 716.1L516.4 720.3"/>
<path class="b" d="M1058.2 653.2L1059.5 602.1M854.2 309.9L855.2 258.2"/>
<path class="g" d="M782 583.3L852.5 610.4M578.7 241.1L647.5 265.4"/>
<path class="b" d="M575.2 591.5L575.6 540.3"/>
<path class="y" d="M644 428h2v2h-2z"/>
<path class="r" d="M989.9 722.5L1056.9 704.1M785.2 377.9L853.3 361.5"/>
<path class="y" d="M369 705h2v2h-2z"/>
<path class="r" d="M505 660.6L574.8 642.5"/>
<path class="g" d="M989.8 473.1L1062.1 499.3"/>
<path class="w" d="M984 726.7L973.4 722.6"/>
<path class="b" d="M783.6 480.9L784.4 429.5"/>
<path class="y" d="M849 319h2v2h-2z"/>
<path class="g" d="M508.1 411.5L576.4 437.3"/>
<path class="m" d="M984 726.7L995.3 723.6"/>
<path class="b" d="M504.4 762.7L504.7 711.7"/>
<path class="y" d="M574 596h2v2h-2zM373 258h2v2h-2z"/>
<path class="r" d="M714.2 549.6L782.8 532.2"/>
<path class="b" d="M992.1 370.3L993.3 318.7"/>
<path class="w" d="M984 726.7L983.7 742.3"/>
<path class="g" d="M919.4 643.6L991.1 671.3M715.9 301.2L786 326.1"/>
<path class="b" d="M712.8 652.1L713.5 600.9M508.7 308.5L509 256.8"/>
<path class="y" d="M779 487h2v2h-2z"/>
<path class="g" d="M437.5 582.1L505.3 609.3"/>
<path class="r" d="M923.5 438.6L990.9 421.8"/>
<path class="y" d="M304 427h2v2h-2z"/>
<path class="r" d="M643.1 721.5L712.2 703.1M438.2 376.6L508.4 360.1"/>
<path class="b" d="M921.4 541.5L922.5 490.1"/>
<path class="g" d="M645.4 471.8L714.9 498.1"/>
<path class="w" d="M642.7 725.7L632.4 721.5"/>
<path class="b" d="M437.9 479.7L438 428.2"/>
<path class="y" d="M710 656h2v2h-2z"/>
<path class="m" d="M984 726.7L984.4 711.1"/>
<path class="y" d="M509 318h2v2h-2z"/>
<path class="r" d="M852.5 610.4L920.4 592.7"/>
<path class="m" d="M642.7 725.7L654.3 722.6"/>
<path class="r" d="M647.5 265.4L716.6 249.6"/>
<path class="g" d="M1056.9 704.1L1129.8 732.3M853.3 361.5L924.6 386.8"/>
<path class="w" d="M984 726.7L972.7 729.8"/>
<path class="b" d="M850.7 712.8L851.6 661.7M646.4 369L647 317.3"/>
<path class="w" d="M642.7 725.7L642.5 741.3"/>
<path class="y" d="M915 547h2v2h-2zM714 209h2v2h-2z"/>
<path class="g" d="M574.8 642.5L643.7 670.3M371.1 299.8L438.4 324.7"/>
<path class="m" d="M984 726.7L994.7 730.9"/>
<path class="y" d="M439 486h2v2h-2z"/>
<path class="r" d="M576.4 437.3L645.9 420.5"/>
<path class="b" d="M1059.5 602.1L1060.8 550.8"/>
<path class="g" d="M782.8 532.2L853.5 559"/>
<path class="b" d="M575.6 540.3L576 488.9"/>
<path class="y" d="M845 716h2v2h-2zM644 377h2v2h-2z"/>
<path class="r" d="M991.1 671.3L1058.2 653.2M786 326.1L854.2 309.9"/>
<path class="y" d="M369 655h2v2h-2z"/>
<path class="m" d="M642.7 725.7L642.8 710.1"/>
<path class="r" d="M505.3 609.3L575.2 591.5"/>
<path class="g" d="M990.9 421.8L1063.4 447.7"/>
<path class="b" d="M988.8 773.5L989.9 722.5M784.4 429.5L785.2 377.9"/>
<path class="y" d="M850 268h2v2h-2z"/>
<path class="g" d="M712.2 703.1L782.3 731.3M508.4 360.1L576.9 385.5"/>
<path class="w" d="M642.7 725.7L631 728.8"/>
<path class="b" d="M504.7 711.7L505 660.6"/>
<path class="y" d="M575 546h2v2h-2zM373 207h2v2h-2z"/>
<path class="r" d="M714.9 498.1L783.6 480.9"/>
<path class="m" d="M642.7 725.7L652.9 729.9"/>
<path class="b" d="M993.3 318.7L994.4 266.8"/>
<path class="g" d="M920.4 592.7L992.3 620M716.6 249.6L786.8 274.1"/>
<path class="b" d="M713.5 600.9L714.2 549.6"/>
<path class="y" d="M780 437h2v2h-2z"/>
<path class="g" d="M437.7 531L505.6 557.8"/>
<path class="r" d="M924.6 386.8L992.1 370.3"/>
<path class="y" d="M505 715h2v2h-2zM304 376h2v2h-2z"/>
<path class="r" d="M643.7 670.3L712.8 652.1M438.4 324.7L508.7 308.5"/>
<path class="b" d="M922.5 490.1L923.5 438.6"/>
<path class="g" d="M645.9 420.5L715.5 446.4"/>
<path class="b" d="M642.6 772.5L643.1 721.5M438 428.2L438.2 376.6"/>
<path class="y" d="M710 606h2v2h-2zM509 267h2v2h-2z"/>
<path class="r" d="M853.5 559L921.4 541.5"/>
<path class="g" d="M1058.2 653.2L1131.3 681M854.2 309.9L925.6 334.9"/>
<path class="b" d="M851.6 661.7L852.5 610.4M647 317.3L647.5 265.4"/>
<path class="y" d="M916 496h2v2h-2z"/>
<path class="g" d="M575.2 591.5L644.2 618.8M371.2 248.2L438.5 272.7"/>
<path class="y" d="M439 436h2v2h-2z"/>
<path class="r" d="M782.3 731.3L850.7 712.8M576.9 385.5L646.4 369"/>
<path class="b" d="M1060.8 550.8L1062.1 499.3"/>
<path class="g" d="M783.6 480.9L854.4 507.4"/>
<path class="w" d="M779.6 735.4L769.2 731.2"/>
<path class="b" d="M576 488.9L576.4 437.3"/>
<path class="y" d="M846 665h2v2h-2zM645 326h2v2h-2z"/>
<path class="r" d="M992.3 620L1059.5 602.1"/>
<path class="m" d="M779.6 735.4L791.2 732.3"/>
<path class="r" d="M786.8 274.1L855.2 258.2"/>
<path class="y" d="M369 604h2v2h-2z"/>
<path class="r" d="M505.6 557.8L575.6 540.3"/>
<path class="g" d="M992.1 370.3L1064.7 395.8"/>
<path class="b" d="M989.9 722.5L991.1 671.3M785.2 377.9L786 326.1"/>
<path class="w" d="M779.6 735.4L779.4 751"/>
<path class="y" d="M851 217h2v2h-2z"/>
<path class="g" d="M712.8 652.1L783.1 680M508.7 308.5L577.3 333.5"/>
<path class="b" d="M505 660.6L505.3 609.3"/>
<path class="y" d="M575 495h2v2h-2z"/>
<path class="r" d="M715.5 446.4L784.4 429.5"/>
<path class="g" d="M921.4 541.5L993.4 568.4"/>
<path class="b" d="M714.2 549.6L714.9 498.1"/>
<path class="y" d="M983 725h2v2h-2zM781 386h2v2h-2z"/>
<path class="g" d="M437.9 479.7L505.8 506.1"/>
<path class="r" d="M925.6 334.9L993.3 318.7"/>
<path class="w" d="M437 734.4L427 730.2"/>
<path class="y" d="M505 664h2v2h-2z"/>
<path class="m" d="M779.6 735.4L779.9 719.7"/>
<path class="y" d="M304 325h2v2h-2z"/>
<path class="r" d="M644.2 618.8L713.5 600.9"/>
<path class="m" d="M437 734.4L448.8 731.2"/>
<path class="r" d="M438.5 272.7L509 256.8"/>
<path class="b" d="M1128.4 783.5L1129.8 732.3M923.5 438.6L924.6 386.8"/>
<path class="g" d="M850.7 712.8L922.2 741.2M646.4 369L716.2 394.5"/>
<path class="w" d="M779.6 735.4L768.1 738.5"/>
<path class="b" d="M643.1 721.5L643.7 670.3M438.2 376.6L438.4 324.7"/>
<path class="w" d="M437 734.4L436.9 750"/>
<path class="y" d="M711 555h2v2h-2zM509 216h2v2h-2z"/>
<path class="r" d="M854.4 507.4L922.5 490.1"/>
<path class="m" d="M779.6 735.4L790.1 739.6"/>
<path class="g" d="M1059.5 602.1L1132.7 629.6M855.2 258.2L926.7 282.8"/>
<path class="b" d="M852.5 610.4L853.5 559"/>
<path class="y" d="M917 446h2v2h-2z"/>
<path class="g" d="M575.6 540.3L644.8 567.2"/>
<path class="y" d="M641 724h2v2h-2zM439 385h2v2h-2z"/>
<path class="r" d="M783.1 680L851.6 661.7M577.3 333.5L647 317.3"/>
<path class="b" d="M1062.1 499.3L1063.4 447.7"/>
<path class="m" d="M437 734.4L437 718.7"/>
<path class="g" d="M784.4 429.5L855.3 455.5"/>
<path class="b" d="M781.5 782.5L782.3 731.3M576.4 437.3L576.9 385.5"/>
<path class="y" d="M847 615h2v2h-2zM645 275h2v2h-2z"/>
<path class="g" d="M504.7 711.7L573.3 740.1"/>
<path class="r" d="M993.4 568.4L1060.8 550.8"/>
<path class="w" d="M437 734.4L425.1 737.5"/>
<path class="y" d="M369 554h2v2h-2z"/>
<path class="r" d="M505.8 506.1L576 488.9"/>
<path class="g" d="M993.3 318.7L1066 343.8"/>
<path class="m" d="M437 734.4L447 738.6"/>
<path class="b" d="M991.1 671.3L992.3 620M786 326.1L786.8 274.1"/>
<path class="g" d="M713.5 600.9L783.9 628.4M509 256.8L577.7 281.4"/>
<path class="b" d="M505.3 609.3L505.6 557.8"/>
<path class="y" d="M575 444h2v2h-2z"/>
<path class="r" d="M922.2 741.2L989.9 722.5M716.2 394.5L785.2 377.9"/>
<path class="g" d="M922.5 490.1L994.6 516.7"/>
<path class="w" d="M917.3 745.1L906.7 740.9"/>
<path class="b" d="M714.9 498.1L715.5 446.4"/>
<path class="y" d="M984 675h2v2h-2zM782 335h2v2h-2z"/>
<path class="g" d="M438 428.2L506.1 454.3"/>
<path class="m" d="M917.3 745.1L928.7 742"/>
<path class="r" d="M926.7 282.8L994.4 266.8"/>
<path class="y" d="M505 614h2v2h-2zM303 274h2v2h-2z"/>
<path class="r" d="M644.8 567.2L714.2 549.6"/>
<path class="b" d="M1129.8 732.3L1131.3 681M924.6 386.8L925.6 334.9"/>
<path class="w" d="M917.3 745.1L917 760.8"/>
<path class="g" d="M851.6 661.7L923.2 689.7M647 317.3L716.9 342.4"/>
<path class="b" d="M643.7 670.3L644.2 618.8M438.4 324.7L438.5 272.7"/>
<path class="y" d="M712 504h2v2h-2z"/>
<path class="r" d="M855.3 455.5L923.5 438.6M573.3 740.1L643.1 721.5"/>
<path class="g" d="M1060.8 550.8L1134.1 577.9"/>
<path class="b" d="M853.5 559L854.4 507.4"/>
<path class="y" d="M918 395h2v2h-2z"/>
<path class="g" d="M576 488.9L645.3 515.5"/>
<path class="w" d="M573.9 744.1L563.7 739.9"/>
<path class="y" d="M642 674h2v2h-2z"/>
<path class="m" d="M917.3 745.1L917.6 729.4"/>
<path class="y" d="M440 334h2v2h-2z"/>
<path class="r" d="M783.9 628.4L852.5 610.4"/>
<path class="m" d="M573.9 744.1L585.7 740.9"/>
<path class="r" d="M577.7 281.4L647.5 265.4"/>
<path class="b" d="M1063.4 447.7L1064.7 395.8"/>
<path class="g" d="M989.9 722.5L1062.7 751.1M785.2 377.9L856.2 403.5"/>
<path class="w" d="M917.3 745.1L905.9 748.2"/>
<path class="b" d="M782.3 731.3L783.1 680M576.9 385.5L577.3 333.5"/>
<path class="w" d="M573.9 744.1L573.8 759.8"/>
<path class="y" d="M848 564h2v2h-2zM646 224h2v2h-2z"/>
<path class="g" d="M505 660.6L573.7 688.6"/>
<path class="r" d="M994.6 516.7L1062.1 499.3"/>
<path class="m" d="M917.3 745.1L927.9 749.3"/>
<path class="y" d="M369 503h2v2h-2z"/>
<path class="a" d="M303.4 221.2L357.3 209.1L357 207.7L379 207.7L359.5 216.8L358.1 215.3L304.6 226.6z"/>
<path class="r" d="M506.1 454.3L576.4 437.3"/>
<path class="g" d="M994.4 266.8L1067.3 291.6"/>
<path class="b" d="M992.3 620L993.4 568.4"/>
<path class="g" d="M714.2 549.6L784.7 576.7"/>
<path class="b" d="M505.6 557.8L505.8 506.1"/>
<path class="y" d="M778 734h2v2h-2zM576 394h2v2h-2z"/>
<path class="r" d="M923.2 689.7L991.1 671.3M716.9 342.4L786 326.1"/>
<path class="m" d="M573.9 744.1L574 728.4"/>
<path class="g" d="M923.5 438.6L995.8 464.7"/>
<path class="b" d="M921.1 792.4L922.2 741.2M715.5 446.4L716.2 394.5"/>
<path class="y" d="M985 624h2v2h-2zM783 284h2v2h-2z"/>
<path class="g" d="M643.1 721.5L713.1 750M438.2 376.6L506.4 402.2"/>
<path class="w" d="M573.9 744.1L562.2 747.2"/>
<path class="y" d="M506 563h2v2h-2zM303 223h2v2h-2z"/>
<path class="r" d="M645.3 515.5L714.9 498.1"/>
<path class="m" d="M573.9 744.1L584.2 748.3"/>
<path class="b" d="M1131.3 681L1132.7 629.6M925.6 334.9L926.7 282.8"/>
<path class="g" d="M852.5 610.4L924.3 638.1M647.5 265.4L717.6 290.2"/>
<path class="b" d="M644.2 618.8L644.8 567.2"/>
<path class="y" d="M712 453h2v2h-2z"/>
<path class="r" d="M1062.7 751.1L1129.8 732.3M856.2 403.5L924.6 386.8"/>
<path class="y" d="M435 733h2v2h-2z"/>
<path class="r" d="M573.7 688.6L643.7 670.3"/>
<path class="g" d="M1062.1 499.3L1135.6 526"/>
<path class="w" d="M1055.6 754.9L1044.8 750.6"/>
<path class="b" d="M854.4 507.4L855.3 455.5"/>
<path class="y" d="M919 344h2v2h-2z"/>
<path class="g" d="M576.4 437.3L645.9 463.5"/>
<path class="m" d="M1055.6 754.9L1066.9 751.7"/>
<path class="b" d="M572.9 791.4L573.3 740.1"/>
<path class="y" d="M642 623h2v2h-2zM440 282h2v2h-2z"/>
<path class="r" d="M784.7 576.7L853.5 559"/>
<path class="b" d="M1064.7 395.8L1066 343.8"/>
<path class="w" d="M1055.6 754.9L1055.2 770.6"/>
<path class="g" d="M991.1 671.3L1064 699.5M786 326.1L857.2 351.3"/>
<path class="b" d="M783.1 680L783.9 628.4M577.3 333.5L577.7 281.4"/>
<path class="y" d="M849 513h2v2h-2z"/>
<path class="g" d="M505.3 609.3L574.1 636.9"/>
<path class="r" d="M995.8 464.7L1063.4 447.7"/>
<path class="y" d="M369 452h2v2h-2z"/>
<path class="r" d="M713.1 750L782.3 731.3M506.4 402.2L576.9 385.5"/>
<path class="b" d="M993.4 568.4L994.6 516.7"/>
<path class="g" d="M714.9 498.1L785.5 524.8"/>
<path class="w" d="M711.5 753.9L701.1 749.6"/>
<path class="b" d="M505.8 506.1L506.1 454.3"/>
<path class="y" d="M779 683h2v2h-2z"/>
<path class="m" d="M1055.6 754.9L1056 739.2"/>
<path class="y" d="M576 342h2v2h-2z"/>
<path class="r" d="M924.3 638.1L992.3 620"/>
<path class="m" d="M711.5 753.9L723.2 750.7"/>
<path class="r" d="M717.6 290.2L786.8 274.1"/>
<path class="g" d="M924.6 386.8L997 412.6"/>
<path class="w" d="M1055.6 754.9L1044.3 758"/>
<path class="b" d="M922.2 741.2L923.2 689.7M716.2 394.5L716.9 342.4"/>
<path class="w" d="M711.5 753.9L711.3 769.6"/>
<path class="y" d="M986 574h2v2h-2zM783 232h2v2h-2z"/>
<path class="g" d="M643.7 670.3L713.8 698.4M438.4 324.7L506.7 350"/>
<path class="m" d="M1055.6 754.9L1066.5 759.1"/>
<path class="y" d="M506 512h2v2h-2z"/>
<path class="r" d="M645.9 463.5L715.5 446.4"/>
<path class="b" d="M1132.7 629.6L1134.1 577.9"/>
<path class="g" d="M853.5 559L925.3 586.2"/>
<path class="b" d="M644.8 567.2L645.3 515.5"/>
<path class="y" d="M916 744h2v2h-2zM713 402h2v2h-2z"/>
<path class="r" d="M1064 699.5L1131.3 681M857.2 351.3L925.6 334.9"/>
<path class="y" d="M436 682h2v2h-2z"/>
<path class="m" d="M711.5 753.9L711.7 738.1"/>
<path class="r" d="M574.1 636.9L644.2 618.8"/>
<path class="g" d="M1063.4 447.7L1137 474"/>
<path class="b" d="M1061.4 802.4L1062.7 751.1M855.3 455.5L856.2 403.5"/>
<path class="y" d="M920 292h2v2h-2z"/>
<path class="g" d="M782.3 731.3L853.6 760M576.9 385.5L646.4 411.3"/>
<path class="w" d="M711.5 753.9L699.9 757"/>
<path class="b" d="M573.3 740.1L573.7 688.6"/>
<path class="y" d="M643 572h2v2h-2zM440 231h2v2h-2z"/>
<path class="r" d="M785.5 524.8L854.4 507.4"/>
<path class="m" d="M711.5 753.9L721.9 758.1"/>
<path class="b" d="M1066 343.8L1067.3 291.6"/>
<path class="g" d="M992.3 620L1065.4 647.8M786.8 274.1L858.1 299"/>
<path class="b" d="M783.9 628.4L784.7 576.7"/>
<path class="y" d="M850 462h2v2h-2z"/>
<path class="g" d="M505.6 557.8L574.6 585.1"/>
<path class="r" d="M997 412.6L1064.7 395.8"/>
<path class="y" d="M572 743h2v2h-2zM370 401h2v2h-2z"/>
<path class="r" d="M713.8 698.4L783.1 680M506.7 350L577.3 333.5"/>
<path class="b" d="M994.6 516.7L995.8 464.7"/>
<path class="g" d="M715.5 446.4L786.3 472.7"/>
<path class="b" d="M712.4 801.5L713.1 750M506.1 454.3L506.4 402.2"/>
<path class="y" d="M780 633h2v2h-2zM577 291h2v2h-2z"/>
<path class="r" d="M925.3 586.2L993.4 568.4"/>
<path class="g" d="M925.6 334.9L998.2 360.3"/>
<path class="b" d="M923.2 689.7L924.3 638.1M716.9 342.4L717.6 290.2"/>
<path class="y" d="M987 523h2v2h-2z"/>
<path class="g" d="M644.2 618.8L714.5 646.6M438.5 272.7L507 297.6"/>
<path class="y" d="M506 461h2v2h-2z"/>
<path class="r" d="M853.6 760L922.2 741.2M646.4 411.3L716.2 394.5"/>
<path class="b" d="M1134.1 577.9L1135.6 526"/>
<path class="g" d="M854.4 507.4L926.4 534.2"/>
<path class="w" d="M849.8 763.7L839.2 759.4"/>
<path class="b" d="M645.3 515.5L645.9 463.5"/>
<path class="y" d="M917 693h2v2h-2zM714 351h2v2h-2z"/>
<path class="r" d="M1065.4 647.8L1132.7 629.6"/>
<path class="m" d="M849.8 763.7L861.3 760.5"/>
<path class="r" d="M858.1 299L926.7 282.8"/>
<path class="y" d="M436 632h2v2h-2z"/>
<path class="r" d="M574.6 585.1L644.8 567.2"/>
<path class="g" d="M1064.7 395.8L1138.5 421.8"/>
<path class="b" d="M1062.7 751.1L1064 699.5M856.2 403.5L857.2 351.3"/>
<path class="w" d="M849.8 763.7L849.5 779.4"/>
<path class="y" d="M921 241h2v2h-2z"/>
<path class="g" d="M783.1 680L854.5 708.3M577.3 333.5L647 359"/>
<path class="b" d="M573.7 688.6L574.1 636.9"/>
<path class="y" d="M643 521h2v2h-2z"/>
<path class="r" d="M786.3 472.7L855.3 455.5"/>
<path class="g" d="M993.4 568.4L1066.7 595.8"/>
<path class="b" d="M784.7 576.7L785.5 524.8"/>
<path class="y" d="M1054 753h2v2h-2zM851 411h2v2h-2z"/>
<path class="g" d="M505.8 506.1L575 533"/>
<path class="r" d="M998.2 360.3L1066 343.8"/>
<path class="w" d="M504.4 762.7L494.2 758.4"/>
<path class="y" d="M573 692h2v2h-2z"/>
<path class="m" d="M849.8 763.7L850.1 747.9"/>
<path class="y" d="M370 350h2v2h-2z"/>
<path class="r" d="M714.5 646.6L783.9 628.4"/>
<path class="m" d="M504.4 762.7L516.3 759.5"/>
<path class="r" d="M507 297.6L577.7 281.4"/>
<path class="b" d="M995.8 464.7L997 412.6"/>
<path class="g" d="M922.2 741.2L994.8 770M716.2 394.5L787.1 420.4"/>
<path class="w" d="M849.8 763.7L838.2 766.8"/>
<path class="b" d="M713.1 750L713.8 698.4M506.4 402.2L506.7 350"/>
<path class="w" d="M504.4 762.7L504.3 778.4"/>
<path class="y" d="M780 582h2v2h-2zM577 240h2v2h-2z"/>
<path class="r" d="M926.4 534.2L994.6 516.7"/>
<path class="m" d="M849.8 763.7L860.4 768"/>
<path class="g" d="M926.7 282.8L999.4 307.8"/>
<path class="b" d="M924.3 638.1L925.3 586.2"/>
<path class="y" d="M988 472h2v2h-2z"/>
<path class="g" d="M644.8 567.2L715.1 594.7"/>
<path class="y" d="M710 752h2v2h-2zM507 410h2v2h-2z"/>
<path class="r" d="M854.5 708.3L923.2 689.7M647 359L716.9 342.4"/>
<path class="b" d="M1135.6 526L1137 474"/>
<path class="m" d="M504.4 762.7L504.5 746.9"/>
<path class="g" d="M855.3 455.5L927.5 482"/>
<path class="b" d="M852.7 811.5L853.6 760M645.9 463.5L646.4 411.3"/>
<path class="y" d="M918 642h2v2h-2zM714 300h2v2h-2z"/>
<path class="g" d="M573.3 740.1L643.1 769"/>
<path class="r" d="M1066.7 595.8L1134.1 577.9"/>
<path class="w" d="M504.4 762.7L492.5 765.8"/>
<path class="y" d="M436 581h2v2h-2z"/>
<path class="r" d="M575 533L645.3 515.5"/>
<path class="g" d="M1066 343.8L1139.9 369.3"/>
<path class="m" d="M504.4 762.7L514.6 766.9"/>
<path class="b" d="M1064 699.5L1065.4 647.8M857.2 351.3L858.1 299"/>
<path class="g" d="M783.9 628.4L855.5 656.4M577.7 281.4L647.5 306.4"/>
<path class="b" d="M574.1 636.9L574.6 585.1"/>
<path class="y" d="M644 470h2v2h-2z"/>
<path class="r" d="M994.8 770L1062.7 751.1M787.1 420.4L856.2 403.5"/>
<path class="g" d="M994.6 516.7L1068 543.7"/>
<path class="w" d="M988.8 773.5L978 769.2"/>
<path class="b" d="M785.5 524.8L786.3 472.7"/>
<path class="y" d="M1055 703h2v2h-2zM852 360h2v2h-2z"/>
<path class="g" d="M506.1 454.3L575.4 480.8"/>
<path class="m" d="M988.8 773.5L1000.2 770.3"/>
<path class="r" d="M999.4 307.8L1067.3 291.6"/>
<path class="y" d="M573 641h2v2h-2zM370 298h2v2h-2z"/>
<path class="r" d="M715.1 594.7L784.7 576.7"/>
<path class="b" d="M997 412.6L998.2 360.3"/>
<path class="w" d="M988.8 773.5L988.4 789.3"/>
<path class="g" d="M923.2 689.7L996 718.2M716.9 342.4L787.9 368"/>
<path class="b" d="M713.8 698.4L714.5 646.6M506.7 350L507 297.6"/>
<path class="y" d="M781 531h2v2h-2z"/>
<path class="r" d="M927.5 482L995.8 464.7M643.1 769L713.1 750"/>
<path class="b" d="M925.3 586.2L926.4 534.2"/>
<path class="y" d="M989 420h2v2h-2z"/>
<path class="g" d="M645.3 515.5L715.8 542.5"/>
<path class="w" d="M642.6 772.5L632.2 768.2"/>
<path class="y" d="M711 702h2v2h-2z"/>
<path class="m" d="M988.8 773.5L989.1 757.7"/>
<path class="y" d="M507 359h2v2h-2z"/>
<path class="r" d="M855.5 656.4L924.3 638.1"/>
<path class="m" d="M642.6 772.5L654.4 769.3"/>
<path class="r" d="M647.5 306.4L717.6 290.2"/>
<path class="b" d="M1137 474L1138.5 421.8"/>
<path class="g" d="M856.2 403.5L928.5 429.6"/>
<path class="w" d="M988.8 773.5L977.3 776.7"/>
<path class="b" d="M853.6 760L854.5 708.3M646.4 411.3L647 359"/>
<path class="w" d="M642.6 772.5L642.4 788.3"/>
<path class="y" d="M919 591h2v2h-2zM715 248h2v2h-2z"/>
<path class="g" d="M573.7 688.6L643.6 717.1"/>
<path class="r" d="M1068 543.7L1135.6 526"/>
<path class="m" d="M988.8 773.5L999.6 777.8"/>
<path class="y" d="M436 529h2v2h-2z"/>
<path class="a" d="M369.6 245.2L423.7 233L423.4 231.5L445.4 231.5L426 240.6L424.6 239.2L370.8 250.7z"/>
<path class="r" d="M575.4 480.8L645.9 463.5"/>
<path class="g" d="M1067.3 291.6L1141.4 316.7"/>
<path class="b" d="M1065.4 647.8L1066.7 595.8"/>
<path class="g" d="M784.7 576.7L856.4 604.3"/>
<path class="b" d="M574.6 585.1L575 533"/>
<path class="y" d="M848 762h2v2h-2zM644 419h2v2h-2z"/>
<path class="r" d="M996 718.2L1064 699.5M787.9 368L857.2 351.3"/>
<path class="m" d="M642.6 772.5L642.8 756.7"/>
<path class="g" d="M995.8 464.7L1069.3 491.4"/>
<path class="b" d="M993.6 821.7L994.8 770M786.3 472.7L787.1 420.4"/>
<path class="y" d="M1057 652h2v2h-2zM853 308h2v2h-2z"/>
<path class="g" d="M713.1 750L784.2 779.1M506.4 402.2L575.8 428.3"/>
<path class="w" d="M642.6 772.5L630.8 775.7"/>
<path class="y" d="M574 590h2v2h-2zM370 247h2v2h-2z"/>
<path class="r" d="M715.8 542.5L785.5 524.8"/>
<path class="m" d="M642.6 772.5L653 776.8"/>
<path class="b" d="M998.2 360.3L999.4 307.8"/>
<path class="g" d="M924.3 638.1L997.2 666.2M717.6 290.2L788.8 315.3"/>
<path class="b" d="M714.5 646.6L715.1 594.7"/>
<path class="y" d="M782 479h2v2h-2z"/>
<path class="r" d="M928.5 429.6L997 412.6"/>
<path class="y" d="M503 761h2v2h-2z"/>
<path class="r" d="M643.6 717.1L713.8 698.4"/>
<path class="w" d="M1128.4 783.5L1117.4 779.1"/>
<path class="b" d="M926.4 534.2L927.5 482"/>
<path class="y" d="M991 369h2v2h-2z"/>
<path class="g" d="M645.9 463.5L716.5 490.1"/>
<path class="m" d="M1128.4 783.5L1139.7 780.2"/>
<path class="b" d="M642.5 820.7L643.1 769"/>
<path class="y" d="M711 651h2v2h-2zM507 307h2v2h-2z"/>
<path class="r" d="M856.4 604.3L925.3 586.2"/>
<path class="b" d="M1138.5 421.8L1139.9 369.3"/>
<path class="w" d="M1128.4 783.5L1128 799.3"/>
<path class="g" d="M857.2 351.3L929.6 377"/>
<path class="b" d="M854.5 708.3L855.5 656.4M647 359L647.5 306.4"/>
<path class="y" d="M920 540h2v2h-2z"/>
<path class="g" d="M574.1 636.9L644.2 665.1"/>
<path class="r" d="M1069.3 491.4L1137 474"/>
<path class="y" d="M436 478h2v2h-2z"/>
<path class="r" d="M784.2 779.1L853.6 760M575.8 428.3L646.4 411.3"/>
<path class="b" d="M1066.7 595.8L1068 543.7"/>
<path class="g" d="M785.5 524.8L857.4 552"/>
<path class="w" d="M781.5 782.5L770.9 778.1"/>
<path class="b" d="M575 533L575.4 480.8"/>
<path class="y" d="M849 711h2v2h-2z"/>
<path class="m" d="M1128.4 783.5L1128.9 767.6"/>
<path class="y" d="M645 367h2v2h-2z"/>
<path class="r" d="M997.2 666.2L1065.4 647.8"/>
<path class="m" d="M781.5 782.5L793.2 779.2"/>
<path class="r" d="M788.8 315.3L858.1 299"/>
<path class="g" d="M997 412.6L1070.7 438.9"/>
<path class="w" d="M1128.4 783.5L1117.1 786.7"/>
<path class="b" d="M994.8 770L996 718.2M787.1 420.4L787.9 368"/>
<path class="w" d="M781.5 782.5L781.3 798.3"/>
<path class="y" d="M1058 601h2v2h-2zM854 257h2v2h-2z"/>
<path class="g" d="M713.8 698.4L785.1 727.1M506.7 350L576.3 375.7"/>
<path class="m" d="M1128.4 783.5L1139.4 787.8"/>
<path class="y" d="M574 539h2v2h-2z"/>
<path class="r" d="M716.5 490.1L786.3 472.7"/>
<path class="g" d="M925.3 586.2L998.4 614"/>
<path class="b" d="M715.1 594.7L715.8 542.5"/>
<path class="y" d="M987 772h2v2h-2zM783 428h2v2h-2z"/>
<path class="r" d="M929.6 377L998.2 360.3"/>
<path class="y" d="M503 710h2v2h-2z"/>
<path class="m" d="M781.5 782.5L781.8 766.6"/>
<path class="r" d="M644.2 665.1L714.5 646.6"/>
<path class="b" d="M927.5 482L928.5 429.6"/>
<path class="y" d="M992 317h2v2h-2z"/>
<path class="g" d="M853.6 760L926.1 789.2M646.4 411.3L717.2 437.6"/>
<path class="w" d="M781.5 782.5L769.8 785.7"/>
<path class="b" d="M643.1 769L643.6 717.1"/>
<path class="y" d="M712 599h2v2h-2zM508 255h2v2h-2z"/>
<path class="r" d="M857.4 552L926.4 534.2"/>
<path class="m" d="M781.5 782.5L792.1 786.8"/>
<path class="b" d="M1139.9 369.3L1141.4 316.7"/>
<path class="g" d="M858.1 299L930.7 324.3"/>
<path class="b" d="M855.5 656.4L856.4 604.3"/>
<path class="y" d="M921 489h2v2h-2z"/>
<path class="g" d="M574.6 585.1L644.7 612.8"/>
<path class="r" d="M1070.7 438.9L1138.5 421.8"/>
<path class="y" d="M641 771h2v2h-2zM437 427h2v2h-2z"/>
<path class="r" d="M785.1 727.1L854.5 708.3M576.3 375.7L647 359"/>
<path class="b" d="M1068 543.7L1069.3 491.4"/>
<path class="g" d="M786.3 472.7L858.3 499.5"/>
<path class="b" d="M783.4 830.9L784.2 779.1M575.4 480.8L575.8 428.3"/>
<path class="y" d="M850 660h2v2h-2zM645 316h2v2h-2z"/>
<path class="r" d="M998.4 614L1066.7 595.8"/>
<path class="g" d="M998.2 360.3L1072 386.2"/>
<path class="b" d="M996 718.2L997.2 666.2M787.9 368L788.8 315.3"/>
<path class="y" d="M1059 549h2v2h-2z"/>
<path class="g" d="M714.5 646.6L785.9 674.9M507 297.6L576.7 322.9"/>
<path class="y" d="M575 487h2v2h-2z"/>
<path class="r" d="M926.1 789.2L994.8 770M717.2 437.6L787.1 420.4"/>
<path class="g" d="M926.4 534.2L999.6 561.6"/>
<path class="w" d="M921.1 792.4L910.3 788.1"/>
<path class="b" d="M715.8 542.5L716.5 490.1"/>
<path class="y" d="M988 721h2v2h-2zM784 376h2v2h-2z"/>
<path class="m" d="M921.1 792.4L932.7 789.2"/>
<path class="r" d="M930.7 324.3L999.4 307.8"/>
<path class="y" d="M503 659h2v2h-2z"/>
<path class="r" d="M644.7 612.8L715.1 594.7"/>
<path class="b" d="M928.5 429.6L929.6 377"/>
<path class="w" d="M921.1 792.4L920.8 808.3"/>
<path class="y" d="M993 265h2v2h-2z"/>
<path class="g" d="M854.5 708.3L927.2 737.1M647 359L717.9 384.8"/>
<path class="b" d="M643.6 717.1L644.2 665.1"/>
<path class="y" d="M713 548h2v2h-2z"/>
<path class="r" d="M858.3 499.5L927.5 482"/>
<path class="b" d="M856.4 604.3L857.4 552"/>
<path class="y" d="M1127 782h2v2h-2zM922 437h2v2h-2z"/>
<path class="g" d="M575 533L645.3 560.4"/>
<path class="r" d="M1072 386.2L1139.9 369.3"/>
<path class="w" d="M572.9 791.4L562.5 787.1"/>
<path class="y" d="M642 720h2v2h-2z"/>
<path class="m" d="M921.1 792.4L921.4 776.6"/>
<path class="y" d="M437 375h2v2h-2z"/>
<path class="r" d="M785.9 674.9L855.5 656.4"/>
<path class="m" d="M572.9 791.4L584.8 788.2"/>
<path class="r" d="M576.7 322.9L647.5 306.4"/>
<path class="b" d="M1069.3 491.4L1070.7 438.9"/>
<path class="g" d="M787.1 420.4L859.3 446.8"/>
<path class="w" d="M921.1 792.4L909.5 795.7"/>
<path class="b" d="M784.2 779.1L785.1 727.1M575.8 428.3L576.3 375.7"/>
<path class="w" d="M572.9 791.4L572.8 807.3"/>
<path class="y" d="M851 609h2v2h-2zM646 264h2v2h-2z"/>
<path class="r" d="M999.6 561.6L1068 543.7"/>
<path class="m" d="M921.1 792.4L931.9 796.8"/>
<path class="g" d="M999.4 307.8L1073.3 333.3"/>
<path class="b" d="M997.2 666.2L998.4 614"/>
<path class="y" d="M1061 498h2v2h-2z"/>
<path class="g" d="M715.1 594.7L786.7 622.5"/>
<path class="y" d="M780 781h2v2h-2zM575 436h2v2h-2z"/>
<path class="r" d="M927.2 737.1L996 718.2M717.9 384.8L787.9 368"/>
<path class="m" d="M572.9 791.4L573 775.5"/>
<path class="g" d="M927.5 482L1000.8 509"/>
<path class="b" d="M925.1 841.1L926.1 789.2M716.5 490.1L717.2 437.6"/>
<path class="y" d="M990 670h2v2h-2zM784 325h2v2h-2z"/>
<path class="g" d="M643.1 769L714.1 798.4"/>
<path class="w" d="M572.9 791.4L561 794.7"/>
<path class="y" d="M504 608h2v2h-2z"/>
<path class="r" d="M645.3 560.4L715.8 542.5"/>
<path class="m" d="M572.9 791.4L583.3 795.8"/>
<path class="b" d="M929.6 377L930.7 324.3"/>
<path class="g" d="M855.5 656.4L928.3 684.8M647.5 306.4L718.6 331.9"/>
<path class="b" d="M644.2 665.1L644.7 612.8"/>
<path class="y" d="M713 497h2v2h-2z"/>
<path class="r" d="M859.3 446.8L928.5 429.6"/>
<path class="w" d="M1061.4 802.4L1050.5 798.1"/>
<path class="b" d="M857.4 552L858.3 499.5"/>
<path class="y" d="M1128 731h2v2h-2zM923 385h2v2h-2z"/>
<path class="g" d="M575.4 480.8L645.9 507.7"/>
<path class="m" d="M1061.4 802.4L1072.9 799.2"/>
<path class="r" d="M1073.3 333.3L1141.4 316.7"/>
<path class="y" d="M642 669h2v2h-2zM437 323h2v2h-2z"/>
<path class="r" d="M786.7 622.5L856.4 604.3"/>
<path class="b" d="M1070.7 438.9L1072 386.2"/>
<path class="w" d="M1061.4 802.4L1061 818.3"/>
<path class="g" d="M787.9 368L860.2 394"/>
<path class="b" d="M785.1 727.1L785.9 674.9M576.3 375.7L576.7 322.9"/>
<path class="y" d="M852 557h2v2h-2z"/>
<path class="r" d="M1000.8 509L1069.3 491.4M714.1 798.4L784.2 779.1"/>
<path class="b" d="M998.4 614L999.6 561.6"/>
<path class="y" d="M1062 446h2v2h-2z"/>
<path class="g" d="M715.8 542.5L787.5 570"/>
<path class="w" d="M712.4 801.5L701.9 797.1"/>
<path class="y" d="M781 730h2v2h-2z"/>
<path class="m" d="M1061.4 802.4L1061.8 786.5"/>
<path class="y" d="M575 384h2v2h-2z"/>
<path class="r" d="M928.3 684.8L997.2 666.2"/>
<path class="m" d="M712.4 801.5L724.2 798.2"/>
<path class="r" d="M718.6 331.9L788.8 315.3"/>
<path class="g" d="M928.5 429.6L1002 456.2"/>
<path class="w" d="M1061.4 802.4L1050 805.7"/>
<path class="b" d="M926.1 789.2L927.2 737.1M717.2 437.6L717.9 384.8"/>
<path class="w" d="M712.4 801.5L712.2 817.4"/>
<path class="y" d="M991 618h2v2h-2zM785 273h2v2h-2z"/>
<path class="g" d="M643.6 717.1L714.7 746.1"/>
<path class="m" d="M1061.4 802.4L1072.4 806.8"/>
<path class="y" d="M504 556h2v2h-2z"/>
<path class="a" d="M437 269.7L491.3 257.3L491 255.8L513 255.7L493.5 264.9L492.2 263.4L438.2 275.2z"/>
<path class="r" d="M645.9 507.7L716.5 490.1"/>
<path class="g" d="M856.4 604.3L929.4 632.3"/>
<path class="b" d="M644.7 612.8L645.3 560.4"/>
<path class="y" d="M920 791h2v2h-2zM714 445h2v2h-2z"/>
<path class="r" d="M860.2 394L929.6 377"/>
<path class="m" d="M712.4 801.5L712.6 785.5"/>
<path class="b" d="M858.3 499.5L859.3 446.8"/>
<path class="y" d="M1130 680h2v2h-2zM924 333h2v2h-2z"/>
<path class="g" d="M784.2 779.1L856.6 808.6M575.8 428.3L646.4 454.9"/>
<path class="w" d="M712.4 801.5L700.6 804.7"/>
<path class="y" d="M643 617h2v2h-2zM437 271h2v2h-2z"/>
<path class="r" d="M787.5 570L857.4 552"/>
<path class="m" d="M712.4 801.5L723 805.8"/>
<path class="b" d="M1072 386.2L1073.3 333.3"/>
<path class="g" d="M788.8 315.3L861.2 340.9"/>
<path class="b" d="M785.9 674.9L786.7 622.5"/>
<path class="y" d="M853 506h2v2h-2z"/>
<path class="r" d="M1002 456.2L1070.7 438.9"/>
<path class="y" d="M571 790h2v2h-2z"/>
<path class="r" d="M714.7 746.1L785.1 727.1"/>
<path class="b" d="M999.6 561.6L1000.8 509"/>
<path class="y" d="M1063 394h2v2h-2z"/>
<path class="g" d="M716.5 490.1L788.3 517.2"/>
<path class="b" d="M713.4 850.4L714.1 798.4"/>
<path class="y" d="M782 678h2v2h-2zM576 332h2v2h-2z"/>
<path class="r" d="M929.4 632.3L998.4 614"/>
<path class="g" d="M929.6 377L1003.3 403.2"/>
<path class="b" d="M927.2 737.1L928.3 684.8M717.9 384.8L718.6 331.9"/>
<path class="y" d="M992 567h2v2h-2z"/>
<path class="g" d="M644.2 665.1L715.4 693.7"/>
<path class="y" d="M504 505h2v2h-2z"/>
<path class="r" d="M856.6 808.6L926.1 789.2M646.4 454.9L717.2 437.6"/>
<path class="g" d="M857.4 552L930.4 579.6"/>
<path class="w" d="M852.7 811.5L841.9 807.1"/>
<path class="b" d="M645.3 560.4L645.9 507.7"/>
<path class="y" d="M921 740h2v2h-2zM715 393h2v2h-2z"/>
<path class="m" d="M852.7 811.5L864.4 808.3"/>
<path class="r" d="M861.2 340.9L930.7 324.3"/>
<path class="b" d="M859.3 446.8L860.2 394"/>
<path class="w" d="M852.7 811.5L852.4 827.5"/>
<path class="y" d="M1131 628h2v2h-2zM925 281h2v2h-2z"/>
<path class="g" d="M785.1 727.1L857.5 756.2M576.3 375.7L647 401.8"/>
<path class="y" d="M643 566h2v2h-2z"/>
<path class="r" d="M788.3 517.2L858.3 499.5"/>
<path class="b" d="M786.7 622.5L787.5 570"/>
<path class="y" d="M1060 801h2v2h-2zM854 454h2v2h-2z"/>
<path class="r" d="M1003.3 403.2L1072 386.2"/>
<path class="y" d="M572 739h2v2h-2z"/>
<path class="m" d="M852.7 811.5L853 795.6"/>
<path class="r" d="M715.4 693.7L785.9 674.9"/>
<path class="b" d="M1000.8 509L1002 456.2"/>
<path class="y" d="M1064 342h2v2h-2z"/>
<path class="g" d="M717.2 437.6L789.2 464.3"/>
<path class="w" d="M852.7 811.5L841 814.8"/>
<path class="b" d="M714.1 798.4L714.7 746.1"/>
<path class="y" d="M782 627h2v2h-2zM576 280h2v2h-2z"/>
<path class="r" d="M930.4 579.6L999.6 561.6"/>
<path class="m" d="M852.7 811.5L863.5 815.9"/>
<path class="g" d="M930.7 324.3L1004.5 350"/>
<path class="b" d="M928.3 684.8L929.4 632.3"/>
<path class="y" d="M993 515h2v2h-2z"/>
<path class="g" d="M644.7 612.8L716.1 641"/>
<path class="y" d="M711 800h2v2h-2zM505 453h2v2h-2z"/>
<path class="r" d="M857.5 756.2L927.2 737.1M647 401.8L717.9 384.8"/>
<path class="g" d="M858.3 499.5L931.5 526.8"/>
<path class="b" d="M855.6 860.8L856.6 808.6M645.9 507.7L646.4 454.9"/>
<path class="y" d="M922 688h2v2h-2zM715 341h2v2h-2z"/>
<path class="b" d="M860.2 394L861.2 340.9"/>
<path class="y" d="M1133 576h2v2h-2z"/>
<path class="g" d="M785.9 674.9L858.5 703.7M576.7 322.9L647.6 348.6"/>
<path class="y" d="M644 514h2v2h-2z"/>
<path class="r" d="M789.2 464.3L859.3 446.8"/>
<path class="w" d="M993.6 821.7L982.7 817.3"/>
<path class="b" d="M787.5 570L788.3 517.2"/>
<path class="y" d="M1061 750h2v2h-2zM855 402h2v2h-2z"/>
<path class="m" d="M993.6 821.7L1005.2 818.4"/>
<path class="r" d="M1004.5 350L1073.3 333.3"/>
<path class="y" d="M572 687h2v2h-2z"/>
<path class="r" d="M716.1 641L786.7 622.5"/>
<path class="b" d="M1002 456.2L1003.3 403.2"/>
<path class="w" d="M993.6 821.7L993.3 837.6"/>
<path class="y" d="M1066 290h2v2h-2z"/>
<path class="g" d="M717.9 384.8L790 411.1"/>
<path class="b" d="M714.7 746.1L715.4 693.7"/>
<path class="y" d="M783 575h2v2h-2z"/>
<path class="r" d="M931.5 526.8L1000.8 509"/>
<path class="b" d="M929.4 632.3L930.4 579.6"/>
<path class="y" d="M994 463h2v2h-2z"/>
<path class="g" d="M645.3 560.4L716.8 588.2"/>
<path class="w" d="M642.5 820.7L632 816.3"/>
<path class="y" d="M712 749h2v2h-2z"/>
<path class="m" d="M993.6 821.7L994 805.7"/>
<path class="y" d="M505 401h2v2h-2z"/>
<path class="r" d="M858.5 703.7L928.3 684.8"/>
<path class="m" d="M642.5 820.7L654.5 817.4"/>
<path class="r" d="M647.6 348.6L718.6 331.9"/>
<path class="g" d="M859.3 446.8L932.6 473.7"/>
<path class="w" d="M993.6 821.7L982 825"/>
<path class="b" d="M856.6 808.6L857.5 756.2M646.4 454.9L647 401.8"/>
<path class="w" d="M642.5 820.7L642.4 836.7"/>
<path class="y" d="M923 637h2v2h-2zM716 289h2v2h-2z"/>
<path class="m" d="M993.6 821.7L1004.6 826.1"/>
<path class="y" d="M1134 525h2v2h-2z"/>
<path class="g" d="M786.7 622.5L859.5 650.9"/>
<path class="y" d="M851 810h2v2h-2zM644 462h2v2h-2z"/>
<path class="r" d="M790 411.1L860.2 394"/>
<path class="m" d="M642.5 820.7L642.7 804.7"/>
<path class="b" d="M788.3 517.2L789.2 464.3"/>
<path class="y" d="M1063 698h2v2h-2zM856 350h2v2h-2z"/>
<path class="g" d="M714.1 798.4L786.2 828.2"/>
<path class="w" d="M642.5 820.7L630.6 824"/>
<path class="y" d="M573 635h2v2h-2z"/>
<path class="r" d="M716.8 588.2L787.5 570"/>
<path class="m" d="M642.5 820.7L653.1 825.1"/>
<path class="b" d="M1003.3 403.2L1004.5 350"/>
<path class="g" d="M718.6 331.9L790.8 357.8"/>
<path class="b" d="M715.4 693.7L716.1 641"/>
<path class="y" d="M784 523h2v2h-2z"/>
<path class="r" d="M932.6 473.7L1002 456.2"/>
<path class="b" d="M930.4 579.6L931.5 526.8"/>
<path class="y" d="M995 411h2v2h-2z"/>
<path class="g" d="M645.9 507.7L717.5 535.1"/>
<path class="y" d="M712 697h2v2h-2zM505 348h2v2h-2z"/>
<path class="r" d="M859.5 650.9L929.4 632.3"/>
<path class="g" d="M860.2 394L933.7 420.4"/>
<path class="b" d="M857.5 756.2L858.5 703.7M647 401.8L647.6 348.6"/>
<path class="y" d="M924 585h2v2h-2z"/>
<path class="r" d="M786.2 828.2L856.6 808.6"/>
<path class="y" d="M1136 472h2v2h-2z"/>
<path class="g" d="M787.5 570L860.4 597.9"/>
<path class="w" d="M783.4 830.9L772.7 826.4"/>
<path class="y" d="M852 759h2v2h-2zM645 410h2v2h-2z"/>
<path class="m" d="M783.4 830.9L795.3 827.6"/>
<path class="r" d="M790.8 357.8L861.2 340.9"/>
<path class="b" d="M789.2 464.3L790 411.1"/>
<path class="w" d="M783.4 830.9L783.2 846.9"/>
<path class="y" d="M1064 646h2v2h-2zM857 297h2v2h-2z"/>
<path class="g" d="M714.7 746.1L787.1 775.6"/>
<path class="y" d="M573 584h2v2h-2z"/>
<path class="a" d="M505.5 294.6L560 281.9L559.7 280.5L581.7 280.3L562.3 289.5L560.9 288.1L506.7 300.1z"/>
<path class="r" d="M717.5 535.1L788.3 517.2"/>
<path class="b" d="M716.1 641L716.8 588.2"/>
<path class="y" d="M992 820h2v2h-2zM785 471h2v2h-2z"/>
<path class="r" d="M933.7 420.4L1003.3 403.2"/>
<path class="m" d="M783.4 830.9L783.7 814.8"/>
<path class="b" d="M931.5 526.8L932.6 473.7"/>
<path class="y" d="M997 359h2v2h-2z"/>
<path class="g" d="M646.4 454.9L718.2 481.9"/>
<path class="w" d="M783.4 830.9L771.6 834.2"/>
<path class="y" d="M713 645h2v2h-2zM506 296h2v2h-2z"/>
<path class="r" d="M860.4 597.9L930.4 579.6"/>
<path class="m" d="M783.4 830.9L794.2 835.3"/>
<path class="g" d="M861.2 340.9L934.8 366.9"/>
<path class="b" d="M858.5 703.7L859.5 650.9"/>
<path class="y" d="M925 533h2v2h-2zM641 819h2v2h-2z"/>
<path class="r" d="M787.1 775.6L857.5 756.2"/>
<path class="y" d="M1137 420h2v2h-2z"/>
<path class="g" d="M788.3 517.2L861.4 544.8"/>
<path class="b" d="M785.4 880.7L786.2 828.2"/>
<path class="y" d="M853 707h2v2h-2zM645 357h2v2h-2z"/>
<path class="b" d="M790 411.1L790.8 357.8"/>
<path class="y" d="M1065 594h2v2h-2z"/>
<path class="g" d="M715.4 693.7L787.9 722.7"/>
<path class="y" d="M573 532h2v2h-2z"/>
<path class="r" d="M718.2 481.9L789.2 464.3"/>
<path class="w" d="M925.1 841.1L914.1 836.6"/>
<path class="b" d="M716.8 588.2L717.5 535.1"/>
<path class="y" d="M993 769h2v2h-2zM786 419h2v2h-2z"/>
<path class="m" d="M925.1 841.1L936.8 837.8"/>
<path class="r" d="M934.8 366.9L1004.5 350"/>
<path class="b" d="M932.6 473.7L933.7 420.4"/>
<path class="w" d="M925.1 841.1L924.7 857.2"/>
<path class="y" d="M998 306h2v2h-2z"/>
<path class="g" d="M647 401.8L718.9 428.4"/>
<path class="y" d="M714 593h2v2h-2z"/>
<path class="r" d="M861.4 544.8L931.5 526.8"/>
<path class="b" d="M859.5 650.9L860.4 597.9"/>
<path class="y" d="M926 481h2v2h-2zM642 768h2v2h-2z"/>
<path class="m" d="M925.1 841.1L925.4 825"/>
<path class="r" d="M787.9 722.7L858.5 703.7"/>
<path class="y" d="M1138 368h2v2h-2z"/>
<path class="g" d="M789.2 464.3L862.4 491.4"/>
<path class="w" d="M925.1 841.1L913.3 844.4"/>
<path class="b" d="M786.2 828.2L787.1 775.6"/>
<path class="y" d="M854 655h2v2h-2zM646 305h2v2h-2z"/>
<path class="m" d="M925.1 841.1L936 845.6"/>
<path class="y" d="M1066 542h2v2h-2z"/>
<path class="g" d="M716.1 641L788.7 669.7"/>
<path class="y" d="M782 829h2v2h-2zM574 479h2v2h-2z"/>
<path class="r" d="M718.9 428.4L790 411.1"/>
<path class="b" d="M717.5 535.1L718.2 481.9"/>
<path class="y" d="M995 717h2v2h-2zM786 366h2v2h-2z"/>
<path class="b" d="M933.7 420.4L934.8 366.9"/>
<path class="g" d="M647.6 348.6L719.6 374.8"/>
<path class="y" d="M714 541h2v2h-2z"/>
<path class="r" d="M862.4 491.4L932.6 473.7"/>
<path class="b" d="M860.4 597.9L861.4 544.8"/>
<path class="y" d="M927 428h2v2h-2zM642 716h2v2h-2z"/>
<path class="r" d="M788.7 669.7L859.5 650.9"/>
<path class="y" d="M1140 315h2v2h-2z"/>
<path class="g" d="M790 411.1L863.3 437.8"/>
<path class="b" d="M787.1 775.6L787.9 722.7"/>
<path class="y" d="M855 603h2v2h-2zM1068 490h2v2h-2z"/>
<path class="g" d="M716.8 588.2L789.6 616.4"/>
<path class="w" d="M713.4 850.4L702.7 845.9"/>
<path class="y" d="M783 778h2v2h-2zM574 427h2v2h-2z"/>
<path class="m" d="M713.4 850.4L725.3 847.1"/>
<path class="r" d="M719.6 374.8L790.8 357.8"/>
<path class="b" d="M718.2 481.9L718.9 428.4"/>
<path class="w" d="M713.4 850.4L713.2 866.5"/>
<path class="y" d="M996 665h2v2h-2zM787 314h2v2h-2zM924 840h2v2h-2zM715 489h2v2h-2z"/>
<path class="r" d="M863.3 437.8L933.7 420.4"/>
<path class="m" d="M713.4 850.4L713.6 834.3"/>
<path class="b" d="M861.4 544.8L862.4 491.4"/>
<path class="y" d="M928 376h2v2h-2z"/>
<path class="w" d="M713.4 850.4L701.4 853.8"/>
<path class="y" d="M643 664h2v2h-2z"/>
<path class="r" d="M789.6 616.4L860.4 597.9"/>
<path class="m" d="M713.4 850.4L724.1 854.9"/>
<path class="g" d="M790.8 357.8L864.3 384.1"/>
<path class="b" d="M787.9 722.7L788.7 669.7"/>
<path class="y" d="M856 550h2v2h-2zM1069 437h2v2h-2z"/>
<path class="g" d="M717.5 535.1L790.4 563"/>
<path class="y" d="M784 726h2v2h-2zM575 374h2v2h-2z"/>
<path class="b" d="M718.9 428.4L719.6 374.8"/>
<path class="y" d="M997 612h2v2h-2z"/>
<path class="w" d="M855.6 860.8L844.7 856.3"/>
<path class="y" d="M925 788h2v2h-2zM716 436h2v2h-2z"/>
<path class="m" d="M855.6 860.8L867.5 857.4"/>
<path class="r" d="M864.3 384.1L934.8 366.9"/>
<path class="b" d="M862.4 491.4L863.3 437.8"/>
<path class="w" d="M855.6 860.8L855.4 876.9"/>
<path class="y" d="M929 323h2v2h-2zM643 611h2v2h-2z"/>
<path class="a" d="M575.1 319.9L629.9 307L629.5 305.6L651.5 305.3L632.1 314.6L630.8 313.2L576.4 325.4z"/>
<path class="r" d="M790.4 563L861.4 544.8"/>
<path class="b" d="M788.7 669.7L789.6 616.4"/>
<path class="y" d="M857 498h2v2h-2z"/>
<path class="m" d="M855.6 860.8L855.9 844.6"/>
<path class="y" d="M1070 385h2v2h-2z"/>
<path class="g" d="M718.2 481.9L791.2 509.3"/>
<path class="w" d="M855.6 860.8L843.8 864.2"/>
<path class="y" d="M784 673h2v2h-2zM575 321h2v2h-2z"/>
<path class="m" d="M855.6 860.8L866.6 865.3"/>
<path class="y" d="M998 560h2v2h-2zM712 849h2v2h-2zM926 736h2v2h-2zM716 383h2v2h-2z"/>
<path class="b" d="M863.3 437.8L864.3 384.1"/>
<path class="y" d="M644 559h2v2h-2z"/>
<path class="r" d="M791.2 509.3L862.4 491.4"/>
<path class="b" d="M789.6 616.4L790.4 563"/>
<path class="y" d="M858 445h2v2h-2zM1072 332h2v2h-2z"/>
<path class="g" d="M718.9 428.4L792.1 455.5"/>
<path class="y" d="M785 621h2v2h-2zM999 507h2v2h-2zM713 797h2v2h-2zM927 683h2v2h-2zM717 330h2v2h-2zM854 859h2v2h-2zM644 506h2v2h-2z"/>
<path class="r" d="M792.1 455.5L863.3 437.8"/>
<path class="b" d="M790.4 563L791.2 509.3"/>
<path class="y" d="M859 392h2v2h-2z"/>
<path class="g" d="M719.6 374.8L792.9 401.4"/>
<path class="y" d="M786 568h2v2h-2zM1001 455h2v2h-2zM713 745h2v2h-2zM928 631h2v2h-2z"/>
<path class="w" d="M785.4 880.7L774.5 876.1"/>
<path class="y" d="M855 807h2v2h-2zM645 453h2v2h-2z"/>
<path class="m" d="M785.4 880.7L797.4 877.3"/>
<path class="r" d="M792.9 401.4L864.3 384.1"/>
<path class="b" d="M791.2 509.3L792.1 455.5"/>
<path class="w" d="M785.4 880.7L785.2 896.9"/>
<path class="y" d="M860 339h2v2h-2zM787 516h2v2h-2z"/>
<path class="m" d="M785.4 880.7L785.7 864.5"/>
<path class="y" d="M1002 402h2v2h-2z"/>
<path class="w" d="M785.4 880.7L773.4 884.1"/>
<path class="y" d="M714 692h2v2h-2z"/>
<path class="m" d="M785.4 880.7L796.3 885.3"/>
<path class="y" d="M929 578h2v2h-2zM856 755h2v2h-2zM645 400h2v2h-2z"/>
<path class="b" d="M792.1 455.5L792.9 401.4"/>
<path class="y" d="M788 463h2v2h-2zM1003 349h2v2h-2zM715 640h2v2h-2z"/>
<path class="a" d="M646 345.7L700.9 332.5L700.5 331.1L722.5 330.7L703.2 340.1L701.8 338.7L647.3 351.1z"/>
<path class="y" d="M930 525h2v2h-2zM857 702h2v2h-2zM646 347h2v2h-2zM784 879h2v2h-2zM788 410h2v2h-2zM715 587h2v2h-2zM931 472h2v2h-2zM858 649h2v2h-2zM785 827h2v2h-2zM789 356h2v2h-2zM716 534h2v2h-2zM932 419h2v2h-2zM859 596h2v2h-2zM786 774h2v2h-2zM717 480h2v2h-2zM933 365h2v2h-2zM860 543h2v2h-2zM786 721h2v2h-2zM717 427h2v2h-2zM861 490h2v2h-2zM787 668h2v2h-2z"/>
<path class="a" d="M718 371.9L773.1 358.5L772.8 357L794.8 356.6L775.5 366.1L774.1 364.6L719.3 377.3z"/>
<path class="y" d="M718 373h2v2h-2zM862 436h2v2h-2zM788 615h2v2h-2zM863 383h2v2h-2zM789 561h2v2h-2zM790 508h2v2h-2zM791 454h2v2h-2z"/>
<path class="a" d="M791.3 398.5L815.9 392.4L815.5 390.9L837.5 390.4L818.2 399.9L816.9 398.5L792.7 404z"/>
<path class="y" d="M791 400h2v2h-2z"/>
</g></svg>
<svg width="25" height="640" viewBox="0 0 25 640" style="left:0;top:0">
<defs>
<pattern id="dc" width="2" height="2" patternUnits="userSpaceOnUse"><rect width="2" height="2" fill="#00e0e0"/><rect width="1" height="1" fill="#60ffff"/><rect x="1" y="1" width="1" height="1" fill="#60ffff"/></pattern>
<pattern id="dr" width="2" height="2" patternUnits="userSpaceOnUse"><rect width="2" height="2" fill="#ff4040"/><rect width="1" height="1" fill="#ffc0c0"/><rect x="1" y="1" width="1" height="1" fill="#ffc0c0"/></pattern>
</defs>
<rect x="0" y="80" width="22" height="345" fill="#f6f6f6"/>
<g fill="#a0a0a0">
<rect x="0" y="79" width="22" height="1"/><rect x="0" y="108" width="22" height="1"/><rect x="0" y="137" width="22" height="1"/><rect x="0" y="166" width="22" height="1"/><rect x="0" y="195" width="22" height="1"/><rect x="0" y="224" width="22" height="1"/><rect x="0" y="253" width="22" height="1"/><rect x="0" y="282" width="22" height="1"/><rect x="0" y="311" width="22" height="1"/><rect x="0" y="340" width="22" height="1"/><rect x="0" y="369" width="22" height="1"/><rect x="0" y="398" width="22" height="1"/>
</g>
<g fill="#808080">
<rect x="2" y="57" width="2" height="2"/><rect x="6" y="57" width="2" height="2"/><rect x="10" y="57" width="2" height="2"/><rect x="14" y="57" width="2" height="2"/>
<rect x="2" y="61" width="2" height="2"/><rect x="6" y="61" width="2" height="2"/><rect x="10" y="61" width="2" height="2"/><rect x="14" y="61" width="2" height="2"/>
<rect x="2" y="65" width="2" height="2"/><rect x="6" y="65" width="2" height="2"/><rect x="10" y="65" width="2" height="2"/><rect x="14" y="65" width="2" height="2"/>
<rect x="2" y="69" width="2" height="2"/><rect x="6" y="69" width="2" height="2"/><rect x="10" y="69" width="2" height="2"/><rect x="14" y="69" width="2" height="2"/>
</g>
<circle cx="9.8" cy="94.6" r="2.6" fill="#202000"/><circle cx="9.2" cy="94" r="2" fill="#e0e000"/>
<path d="M3.5 129.5L16.5 116.5" stroke="#000" stroke-width="2"/><path d="M3 128.5L16 115.5" stroke="#00d8d8" stroke-width="1.6"/>
<rect x="4.5" y="146.5" width="11" height="11" fill="url(#dc)" stroke="#000"/>
<path d="M3.5 177.5L6.5 174.5H16.5V184.5L13.5 187.5Z" fill="#007070" stroke="#000"/>
<path d="M3.5 177.5L6.5 174.5H16.5L13.5 177.5Z" fill="url(#dc)"/>
<rect x="3.5" y="177.5" width="10" height="10" fill="url(#dc)" stroke="#000"/>
<path d="M4 214L16 202M4 214V208M4 214H10M13 201V206H18" stroke="#00d0d0" stroke-width="1.8" fill="none"/>
<path d="M2.5 244.5L13.5 233.5" stroke="#0000ff" stroke-width="1.8"/><path d="M15 232L10 233.5L13.5 237Z" fill="#0000ff"/>
<circle cx="12.8" cy="242.8" r="2.6" fill="#004040"/><circle cx="12.6" cy="242.6" r="1.7" fill="#00d0d0"/>
<rect x="2.5" y="261.5" width="15" height="13" fill="#fff" stroke="#000"/>
<path d="M5 266H11V264L15 268L11 272V270H5Z" fill="url(#dc)" stroke="#000080" stroke-width="1"/>
<circle cx="10" cy="296.8" r="2.5" fill="#600000"/><circle cx="9.8" cy="296.6" r="1.6" fill="#c00000"/>
<path d="M4.5 321.5V330C4.5 333 15 333 15 330V321.5" fill="url(#dc)" stroke="#000"/>
<ellipse cx="9.75" cy="321.5" rx="5.25" ry="2.2" fill="#00ffff" stroke="#000"/>
<path d="M2.5 357.5L13 347.5L17.5 352L7 362Z" fill="#00c8c8" stroke="#000"/>
<path d="M6 356L8 354M10 352L12 350M8 358L10 356M12 354L14 352" stroke="#004040" stroke-width="1"/>
<rect x="3.5" y="377.5" width="10" height="14" fill="none" stroke="#000" stroke-dasharray="1 1"/>
<path d="M4.5 377V389" stroke="#0000ff" stroke-width="1.5"/>
<circle cx="10" cy="383.5" r="3" fill="url(#dr)"/><rect x="13" y="380" width="3.5" height="7" fill="#ff0000" stroke="#000" stroke-width="0.6"/>
<path d="M2 406H7M4.5 406V418M2 418H7" stroke="#0000ff" stroke-width="1.8"/>
<rect x="7.5" y="408.5" width="9.5" height="7" fill="url(#dr)" stroke="#000"/>
<g stroke="#000" stroke-width="1.2" fill="none">
<path d="M2 437H12L16 441.5H7M7 437V446M11 437V446M7 441.5L1.5 447H7"/>
<rect x="2" y="436" width="2" height="2" fill="#000"/><rect x="10.5" y="445.5" width="2" height="2" fill="#000"/>
<path d="M2.6 463.6H14.4V475.4H2.6ZM8.5 463.6V475.4M2.6 469.5H14.4" stroke-width="1.5"/>
<path d="M3.5 496.5L12.5 490.5V506.5L9.5 505M3.5 496.5V504.5L8.5 503M9 494V505M3.5 500L9 497.5M9 497.5L14.5 500V506.5"/>
<path d="M2.6 524.6L5.5 521.5H16V532L13 535H2.6ZM2.6 524.6H13V535M8 524.6V535M2.6 530H13M13 524.6L16 521.5"/>
<path d="M3 552H14M5 552V562M12 552V562M5 557H12M3 552L5 550M5 562L4 561M5 562L6 561M12 562L11 561M12 562L13 561"/>
<path d="M3.5 582V592L6 593V587H11V593L14 592V582M3.5 582C3.5 578 14 578 14 582C14 585 3.5 585 3.5 582M6 584V587M11 584V587"/>
<path d="M3.5 611.5L12.5 607.5V621L14.5 621.5V612.5M3.5 611.5V621L8.5 619.5V610M8.5 619.5L14.5 621.5"/>
</g>
</svg>

</body></html>
